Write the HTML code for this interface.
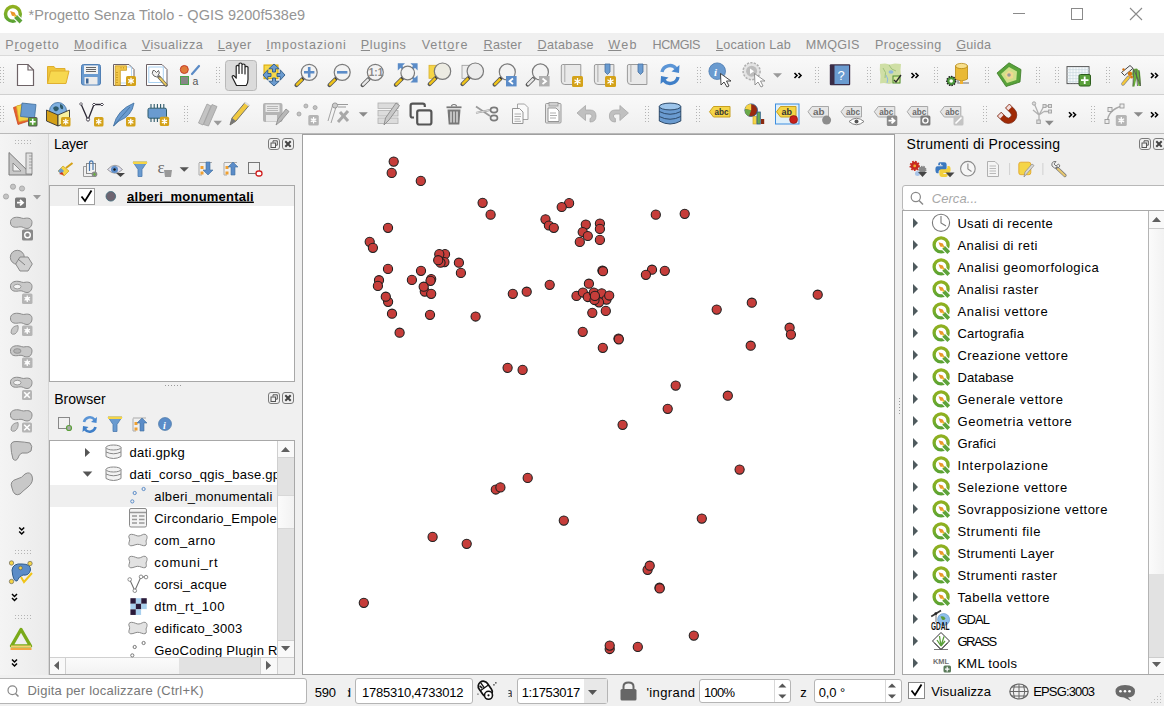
<!DOCTYPE html>
<html><head><meta charset="utf-8">
<style>
*{box-sizing:border-box;margin:0;padding:0}
html,body{width:1164px;height:706px;overflow:hidden;background:#f0f0f0;font-family:"Liberation Sans",sans-serif}
.a{position:absolute}
svg{display:block}
</style></head><body>
<div class="a" style="left:0;top:0;width:1164px;height:33px;background:#fff"></div>
<div class="a" style="left:0;top:55px;width:1164px;height:1px;background:#dadada"></div>
<div class="a" style="left:0;top:56px;width:1164px;height:38px;background:linear-gradient(#f9f9f9,#efefef)"></div>
<div class="a" style="left:0;top:94px;width:1164px;height:1px;background:#d0d0d0"></div>
<div class="a" style="left:0;top:95px;width:1164px;height:38px;background:linear-gradient(#f9f9f9,#efefef)"></div>
<div class="a" style="left:0;top:133px;width:1164px;height:1px;background:#b9b9b9"></div>
<div class="a" style="left:0;top:134px;width:48px;height:541px;background:linear-gradient(90deg,#f4f4f4,#ebebeb)"></div>
<div class="a" style="left:48px;top:134px;width:1px;height:541px;background:#d6d6d6"></div>
<!-- layer tree -->
<div class="a" style="left:49px;top:185px;width:246px;height:197px;background:#fff;border:1px solid #a8a8a8"></div>
<div class="a" style="left:50px;top:186px;width:244px;height:20px;background:#efefef"></div>
<!-- browser tree -->
<div class="a" style="left:49px;top:440px;width:246px;height:235px;background:#fff;border:1px solid #a8a8a8"></div>
<div class="a" style="left:50px;top:485px;width:227px;height:22px;background:#efefef"></div>
<div class="a" style="left:277px;top:441px;width:17px;height:216px;background:#e2e2e2;border-left:1px solid #cfcfcf"></div>
<div class="a" style="left:278px;top:441px;width:16px;height:17px;background:#f9f9f9;border-bottom:1px solid #d4d4d4"></div>
<div class="a" style="left:278px;top:495px;width:16px;height:34px;background:linear-gradient(90deg,#fbfbfb,#f2f2f2);border-top:1px solid #d8d8d8;border-bottom:1px solid #d8d8d8"></div>
<div class="a" style="left:278px;top:640px;width:16px;height:17px;background:#f9f9f9;border-top:1px solid #d0d0d0"></div>
<div class="a" style="left:50px;top:657px;width:244px;height:17px;background:#e2e2e2;border-top:1px solid #d0d0d0"></div>
<div class="a" style="left:50px;top:658px;width:16px;height:16px;background:#f9f9f9;border-right:1px solid #d0d0d0"></div>
<div class="a" style="left:66px;top:658px;width:113px;height:16px;background:linear-gradient(#fbfbfb,#f2f2f2)"></div>
<div class="a" style="left:260px;top:658px;width:17px;height:16px;background:#f9f9f9;border-left:1px solid #d0d0d0"></div>
<div class="a" style="left:277px;top:658px;width:17px;height:16px;background:#f0f0f0;border-left:1px solid #d0d0d0"></div>
<svg class="a" style="left:0;top:0" width="1164" height="706"><path d="M281 452H290L285.5 447Z M281 646H290.2L285.6 651Z M54 665.5L59 661V670Z M266 660.8V670L271.2 665.4Z" fill="#606060"/></svg>
<!-- map canvas -->
<div class="a" style="left:302px;top:134px;width:593px;height:541px;border:1px solid #a0a0a0;background:#fff;overflow:hidden">
<svg class="a" style="left:-303px;top:-135px" width="1164" height="706"><g fill="#c63d3a" stroke="#1e1e1e" stroke-width="1.05"><circle cx="393.7" cy="161.6" r="4.6"/><circle cx="391.7" cy="172.9" r="4.6"/><circle cx="420.8" cy="180.9" r="4.6"/><circle cx="482.6" cy="202.8" r="4.6"/><circle cx="490.6" cy="214.7" r="4.6"/><circle cx="388.0" cy="227.8" r="4.6"/><circle cx="369.7" cy="241.8" r="4.6"/><circle cx="372.9" cy="247.8" r="4.6"/><circle cx="388.0" cy="268.9" r="4.6"/><circle cx="379.0" cy="280.2" r="4.6"/><circle cx="377.9" cy="285.9" r="4.6"/><circle cx="388.1" cy="301.8" r="4.6"/><circle cx="385.8" cy="296.7" r="4.6"/><circle cx="392.0" cy="313.7" r="4.6"/><circle cx="411.9" cy="279.9" r="4.6"/><circle cx="421.0" cy="270.8" r="4.6"/><circle cx="431.2" cy="279.1" r="4.6"/><circle cx="430.5" cy="280.8" r="4.6"/><circle cx="424.8" cy="291.6" r="4.6"/><circle cx="423.7" cy="286.7" r="4.6"/><circle cx="431.2" cy="293.8" r="4.6"/><circle cx="430.0" cy="314.8" r="4.6"/><circle cx="445.0" cy="254.2" r="4.6"/><circle cx="444.4" cy="262.1" r="4.6"/><circle cx="439.3" cy="254.2" r="4.6"/><circle cx="440.5" cy="262.7" r="4.6"/><circle cx="438.2" cy="260.2" r="4.6"/><circle cx="458.9" cy="262.7" r="4.6"/><circle cx="460.9" cy="272.9" r="4.6"/><circle cx="475.6" cy="316.5" r="4.6"/><circle cx="512.8" cy="293.8" r="4.6"/><circle cx="526.7" cy="291.7" r="4.6"/><circle cx="549.7" cy="284.8" r="4.6"/><circle cx="569.1" cy="203.2" r="4.6"/><circle cx="561.7" cy="207.0" r="4.6"/><circle cx="545.5" cy="219.3" r="4.6"/><circle cx="548.9" cy="225.5" r="4.6"/><circle cx="553.8" cy="227.8" r="4.6"/><circle cx="655.8" cy="214.7" r="4.6"/><circle cx="684.7" cy="213.8" r="4.6"/><circle cx="585.8" cy="224.6" r="4.6"/><circle cx="599.9" cy="223.5" r="4.6"/><circle cx="599.9" cy="228.9" r="4.6"/><circle cx="582.7" cy="232.0" r="4.6"/><circle cx="587.8" cy="236.0" r="4.6"/><circle cx="579.8" cy="241.9" r="4.6"/><circle cx="599.9" cy="239.9" r="4.6"/><circle cx="602.4" cy="270.5" r="4.6"/><circle cx="603.0" cy="271.2" r="4.6"/><circle cx="652.0" cy="269.7" r="4.6"/><circle cx="645.9" cy="274.8" r="4.6"/><circle cx="664.8" cy="270.8" r="4.6"/><circle cx="588.9" cy="283.7" r="4.6"/><circle cx="576.5" cy="295.9" r="4.6"/><circle cx="582.9" cy="292.5" r="4.6"/><circle cx="587.8" cy="297.0" r="4.6"/><circle cx="593.8" cy="292.5" r="4.6"/><circle cx="601.7" cy="293.3" r="4.6"/><circle cx="606.5" cy="299.6" r="4.6"/><circle cx="609.2" cy="295.5" r="4.6"/><circle cx="599.0" cy="302.3" r="4.6"/><circle cx="594.5" cy="300.0" r="4.6"/><circle cx="594.9" cy="295.9" r="4.6"/><circle cx="592.3" cy="312.8" r="4.6"/><circle cx="605.8" cy="310.9" r="4.6"/><circle cx="582.7" cy="331.8" r="4.6"/><circle cx="602.8" cy="347.8" r="4.6"/><circle cx="618.5" cy="338.5" r="4.6"/><circle cx="618.8" cy="339.3" r="4.6"/><circle cx="716.7" cy="309.6" r="4.6"/><circle cx="751.8" cy="302.7" r="4.6"/><circle cx="817.7" cy="294.7" r="4.6"/><circle cx="789.6" cy="327.7" r="4.6"/><circle cx="790.9" cy="334.6" r="4.6"/><circle cx="750.7" cy="345.7" r="4.6"/><circle cx="507.6" cy="367.8" r="4.6"/><circle cx="522.6" cy="369.9" r="4.6"/><circle cx="675.7" cy="385.6" r="4.6"/><circle cx="727.8" cy="395.7" r="4.6"/><circle cx="667.7" cy="408.8" r="4.6"/><circle cx="622.6" cy="424.8" r="4.6"/><circle cx="739.6" cy="469.6" r="4.6"/><circle cx="527.7" cy="477.9" r="4.6"/><circle cx="495.8" cy="489.5" r="4.6"/><circle cx="500.4" cy="487.4" r="4.6"/><circle cx="563.8" cy="520.6" r="4.6"/><circle cx="701.8" cy="518.6" r="4.6"/><circle cx="432.6" cy="536.9" r="4.6"/><circle cx="466.7" cy="543.8" r="4.6"/><circle cx="399.6" cy="332.7" r="4.6"/><circle cx="363.8" cy="602.8" r="4.6"/><circle cx="647.6" cy="569.8" r="4.6"/><circle cx="649.7" cy="565.7" r="4.6"/><circle cx="659.5" cy="587.7" r="4.6"/><circle cx="659.7" cy="588.4" r="4.6"/><circle cx="693.8" cy="635.6" r="4.6"/><circle cx="609.7" cy="649.0" r="4.6"/><circle cx="609.7" cy="645.6" r="4.6"/><circle cx="637.8" cy="646.9" r="4.6"/></g></svg>
</div>
<!-- processing -->
<div class="a" style="left:902px;top:185px;width:270px;height:26px;background:#fff;border:1px solid #b8b8b8;border-radius:3px"></div>
<div class="a" style="left:902px;top:210px;width:270px;height:465px;background:#fff;border:1px solid #a8a8a8"></div>
<div class="a" style="left:1148px;top:211px;width:16px;height:463px;background:#e2e2e2;border-left:1px solid #b4b4b4"></div>
<div class="a" style="left:1149px;top:211px;width:15px;height:18px;background:#f9f9f9;border-bottom:1px solid #cdcdcd"></div>
<div class="a" style="left:1149px;top:229px;width:15px;height:345px;background:linear-gradient(90deg,#fbfbfb,#f2f2f2)"></div>
<div class="a" style="left:1149px;top:657px;width:15px;height:17px;background:#f9f9f9;border-top:1px solid #cdcdcd"></div>
<svg class="a" style="left:0;top:0" width="1164" height="706"><path d="M1152 222H1161L1156.5 217Z M1152 662H1161L1156.5 667Z" fill="#606060"/></svg>
<!-- status bar inputs -->
<div class="a" style="left:-3px;top:678px;width:310px;height:26px;background:#fff;border:1px solid #b5b5b5;border-radius:3px"></div>
<div class="a" style="left:355px;top:678px;width:118px;height:26px;background:#fff;border:1px solid #b5b5b5;border-radius:3px"></div>
<div class="a" style="left:517px;top:678px;width:91px;height:26px;background:#fff;border:1px solid #b5b5b5;border-radius:3px"></div>
<div class="a" style="left:584px;top:679px;width:23px;height:24px;background:#e8e8e8"></div>
<div class="a" style="left:699px;top:679px;width:92px;height:24px;background:#fff;border:1px solid #b5b5b5;border-radius:3px"></div>
<div class="a" style="left:774px;top:680px;width:1px;height:22px;background:#d8d8d8"></div>
<div class="a" style="left:814px;top:679px;width:88px;height:24px;background:#fff;border:1px solid #b5b5b5;border-radius:3px"></div>
<div class="a" style="left:885px;top:680px;width:1px;height:22px;background:#d8d8d8"></div>
<svg class="a" style="left:0;top:0;pointer-events:none" width="1164" height="706" font-family="Liberation Sans"><defs><linearGradient id="qg" x1="0" y1="0" x2="0" y2="1"><stop offset="0" stop-color="#90b020"/><stop offset="0.55" stop-color="#79ad28"/><stop offset="1" stop-color="#5aa232"/></linearGradient></defs><circle cx="12.894444444444446" cy="13.894444444444446" r="7.388888888888889" fill="none" stroke="url(#qg)" stroke-width="3.4833333333333334"/><path d="M15.322222222222221 16.322222222222223L20.705555555555556 21.705555555555556" stroke="#fff" stroke-width="6.333333333333334" stroke-linecap="butt"/><path d="M15.533333333333333 16.53333333333333L21.022222222222226 22.022222222222226" stroke="#5da33a" stroke-width="4.011111111111111" stroke-linecap="butt"/><path d="M10.15 11.044444444444444L14.688888888888888 12.522222222222222L16.58888888888889 16.744444444444444L11.944444444444445 15.688888888888888Z" fill="#e8952a"/><path d="M13.422222222222222 14.316666666666668L16.58888888888889 16.744444444444444L14.266666666666666 16.63888888888889Z" fill="#f5d040"/><path d="M1013 13.5H1025" stroke="#8a8a8a"/><rect x="1071.5" y="8.5" width="11" height="11" fill="none" stroke="#8a8a8a"/><path d="M1130 8L1142 20M1142 8L1130 20" stroke="#8a8a8a" stroke-width="1.1"/><g fill="#9a9a9a"><rect x="165" y="385" width="1" height="1"/><rect x="899" y="398" width="1" height="1"/><rect x="168" y="385" width="1" height="1"/><rect x="899" y="401" width="1" height="1"/><rect x="171" y="385" width="1" height="1"/><rect x="899" y="404" width="1" height="1"/><rect x="174" y="385" width="1" height="1"/><rect x="899" y="407" width="1" height="1"/><rect x="177" y="385" width="1" height="1"/><rect x="899" y="410" width="1" height="1"/><rect x="180" y="385" width="1" height="1"/><rect x="899" y="413" width="1" height="1"/></g><g fill="#b4b4b4"><rect x="0" y="67" width="1" height="1"/><rect x="3" y="67" width="1" height="1"/><rect x="0" y="70" width="1" height="1"/><rect x="3" y="70" width="1" height="1"/><rect x="0" y="73" width="1" height="1"/><rect x="3" y="73" width="1" height="1"/><rect x="0" y="76" width="1" height="1"/><rect x="3" y="76" width="1" height="1"/><rect x="0" y="79" width="1" height="1"/><rect x="3" y="79" width="1" height="1"/><rect x="0" y="82" width="1" height="1"/><rect x="3" y="82" width="1" height="1"/><rect x="216" y="67" width="1" height="1"/><rect x="219" y="67" width="1" height="1"/><rect x="216" y="70" width="1" height="1"/><rect x="219" y="70" width="1" height="1"/><rect x="216" y="73" width="1" height="1"/><rect x="219" y="73" width="1" height="1"/><rect x="216" y="76" width="1" height="1"/><rect x="219" y="76" width="1" height="1"/><rect x="216" y="79" width="1" height="1"/><rect x="219" y="79" width="1" height="1"/><rect x="216" y="82" width="1" height="1"/><rect x="219" y="82" width="1" height="1"/><rect x="697" y="67" width="1" height="1"/><rect x="700" y="67" width="1" height="1"/><rect x="697" y="70" width="1" height="1"/><rect x="700" y="70" width="1" height="1"/><rect x="697" y="73" width="1" height="1"/><rect x="700" y="73" width="1" height="1"/><rect x="697" y="76" width="1" height="1"/><rect x="700" y="76" width="1" height="1"/><rect x="697" y="79" width="1" height="1"/><rect x="700" y="79" width="1" height="1"/><rect x="697" y="82" width="1" height="1"/><rect x="700" y="82" width="1" height="1"/><rect x="815" y="67" width="1" height="1"/><rect x="818" y="67" width="1" height="1"/><rect x="815" y="70" width="1" height="1"/><rect x="818" y="70" width="1" height="1"/><rect x="815" y="73" width="1" height="1"/><rect x="818" y="73" width="1" height="1"/><rect x="815" y="76" width="1" height="1"/><rect x="818" y="76" width="1" height="1"/><rect x="815" y="79" width="1" height="1"/><rect x="818" y="79" width="1" height="1"/><rect x="815" y="82" width="1" height="1"/><rect x="818" y="82" width="1" height="1"/><rect x="867" y="67" width="1" height="1"/><rect x="870" y="67" width="1" height="1"/><rect x="867" y="70" width="1" height="1"/><rect x="870" y="70" width="1" height="1"/><rect x="867" y="73" width="1" height="1"/><rect x="870" y="73" width="1" height="1"/><rect x="867" y="76" width="1" height="1"/><rect x="870" y="76" width="1" height="1"/><rect x="867" y="79" width="1" height="1"/><rect x="870" y="79" width="1" height="1"/><rect x="867" y="82" width="1" height="1"/><rect x="870" y="82" width="1" height="1"/><rect x="934" y="67" width="1" height="1"/><rect x="937" y="67" width="1" height="1"/><rect x="934" y="70" width="1" height="1"/><rect x="937" y="70" width="1" height="1"/><rect x="934" y="73" width="1" height="1"/><rect x="937" y="73" width="1" height="1"/><rect x="934" y="76" width="1" height="1"/><rect x="937" y="76" width="1" height="1"/><rect x="934" y="79" width="1" height="1"/><rect x="937" y="79" width="1" height="1"/><rect x="934" y="82" width="1" height="1"/><rect x="937" y="82" width="1" height="1"/><rect x="985" y="67" width="1" height="1"/><rect x="988" y="67" width="1" height="1"/><rect x="985" y="70" width="1" height="1"/><rect x="988" y="70" width="1" height="1"/><rect x="985" y="73" width="1" height="1"/><rect x="988" y="73" width="1" height="1"/><rect x="985" y="76" width="1" height="1"/><rect x="988" y="76" width="1" height="1"/><rect x="985" y="79" width="1" height="1"/><rect x="988" y="79" width="1" height="1"/><rect x="985" y="82" width="1" height="1"/><rect x="988" y="82" width="1" height="1"/><rect x="1036" y="67" width="1" height="1"/><rect x="1039" y="67" width="1" height="1"/><rect x="1036" y="70" width="1" height="1"/><rect x="1039" y="70" width="1" height="1"/><rect x="1036" y="73" width="1" height="1"/><rect x="1039" y="73" width="1" height="1"/><rect x="1036" y="76" width="1" height="1"/><rect x="1039" y="76" width="1" height="1"/><rect x="1036" y="79" width="1" height="1"/><rect x="1039" y="79" width="1" height="1"/><rect x="1036" y="82" width="1" height="1"/><rect x="1039" y="82" width="1" height="1"/><rect x="1055" y="67" width="1" height="1"/><rect x="1058" y="67" width="1" height="1"/><rect x="1055" y="70" width="1" height="1"/><rect x="1058" y="70" width="1" height="1"/><rect x="1055" y="73" width="1" height="1"/><rect x="1058" y="73" width="1" height="1"/><rect x="1055" y="76" width="1" height="1"/><rect x="1058" y="76" width="1" height="1"/><rect x="1055" y="79" width="1" height="1"/><rect x="1058" y="79" width="1" height="1"/><rect x="1055" y="82" width="1" height="1"/><rect x="1058" y="82" width="1" height="1"/><rect x="1106" y="67" width="1" height="1"/><rect x="1109" y="67" width="1" height="1"/><rect x="1106" y="70" width="1" height="1"/><rect x="1109" y="70" width="1" height="1"/><rect x="1106" y="73" width="1" height="1"/><rect x="1109" y="73" width="1" height="1"/><rect x="1106" y="76" width="1" height="1"/><rect x="1109" y="76" width="1" height="1"/><rect x="1106" y="79" width="1" height="1"/><rect x="1109" y="79" width="1" height="1"/><rect x="1106" y="82" width="1" height="1"/><rect x="1109" y="82" width="1" height="1"/><rect x="0" y="106" width="1" height="1"/><rect x="3" y="106" width="1" height="1"/><rect x="0" y="109" width="1" height="1"/><rect x="3" y="109" width="1" height="1"/><rect x="0" y="112" width="1" height="1"/><rect x="3" y="112" width="1" height="1"/><rect x="0" y="115" width="1" height="1"/><rect x="3" y="115" width="1" height="1"/><rect x="0" y="118" width="1" height="1"/><rect x="3" y="118" width="1" height="1"/><rect x="0" y="121" width="1" height="1"/><rect x="3" y="121" width="1" height="1"/><rect x="184" y="106" width="1" height="1"/><rect x="187" y="106" width="1" height="1"/><rect x="184" y="109" width="1" height="1"/><rect x="187" y="109" width="1" height="1"/><rect x="184" y="112" width="1" height="1"/><rect x="187" y="112" width="1" height="1"/><rect x="184" y="115" width="1" height="1"/><rect x="187" y="115" width="1" height="1"/><rect x="184" y="118" width="1" height="1"/><rect x="187" y="118" width="1" height="1"/><rect x="184" y="121" width="1" height="1"/><rect x="187" y="121" width="1" height="1"/><rect x="645" y="106" width="1" height="1"/><rect x="648" y="106" width="1" height="1"/><rect x="645" y="109" width="1" height="1"/><rect x="648" y="109" width="1" height="1"/><rect x="645" y="112" width="1" height="1"/><rect x="648" y="112" width="1" height="1"/><rect x="645" y="115" width="1" height="1"/><rect x="648" y="115" width="1" height="1"/><rect x="645" y="118" width="1" height="1"/><rect x="648" y="118" width="1" height="1"/><rect x="645" y="121" width="1" height="1"/><rect x="648" y="121" width="1" height="1"/><rect x="696" y="106" width="1" height="1"/><rect x="699" y="106" width="1" height="1"/><rect x="696" y="109" width="1" height="1"/><rect x="699" y="109" width="1" height="1"/><rect x="696" y="112" width="1" height="1"/><rect x="699" y="112" width="1" height="1"/><rect x="696" y="115" width="1" height="1"/><rect x="699" y="115" width="1" height="1"/><rect x="696" y="118" width="1" height="1"/><rect x="699" y="118" width="1" height="1"/><rect x="696" y="121" width="1" height="1"/><rect x="699" y="121" width="1" height="1"/><rect x="983" y="106" width="1" height="1"/><rect x="986" y="106" width="1" height="1"/><rect x="983" y="109" width="1" height="1"/><rect x="986" y="109" width="1" height="1"/><rect x="983" y="112" width="1" height="1"/><rect x="986" y="112" width="1" height="1"/><rect x="983" y="115" width="1" height="1"/><rect x="986" y="115" width="1" height="1"/><rect x="983" y="118" width="1" height="1"/><rect x="986" y="118" width="1" height="1"/><rect x="983" y="121" width="1" height="1"/><rect x="986" y="121" width="1" height="1"/><rect x="1091" y="106" width="1" height="1"/><rect x="1094" y="106" width="1" height="1"/><rect x="1091" y="109" width="1" height="1"/><rect x="1094" y="109" width="1" height="1"/><rect x="1091" y="112" width="1" height="1"/><rect x="1094" y="112" width="1" height="1"/><rect x="1091" y="115" width="1" height="1"/><rect x="1094" y="115" width="1" height="1"/><rect x="1091" y="118" width="1" height="1"/><rect x="1094" y="118" width="1" height="1"/><rect x="1091" y="121" width="1" height="1"/><rect x="1094" y="121" width="1" height="1"/></g><path d="M17.5 64.5H28L33.5 70V85.5H17.5Z" fill="#fff" stroke="#6d6266" stroke-width="1.2"/><path d="M28 64.5V70H33.5" fill="none" stroke="#6d6266" stroke-width="1.2"/><path d="M47.5 83.5V66.5H54L55.5 68.5H65V71" fill="#f0c63a" stroke="#dfae2e"/><path d="M47.5 83.5L50.5 71H69L66 83.5Z" fill="#f7d84f" stroke="#e0b030"/><rect x="81.5" y="64.5" width="19" height="20.5" rx="2" fill="#6a9bd0" stroke="#507fb4"/><rect x="84" y="65.5" width="14" height="8.5" fill="#f2f2f2"/><path d="M86 67.5H96M86 69.5H96M86 71.5H96" stroke="#555" stroke-width="0.9"/><rect x="84.5" y="77" width="13" height="7.5" fill="#ececec"/><rect x="86" y="78.5" width="2.5" height="5" fill="#3d6494"/><path d="M113.5 64.5H129L134 69.5V85.5H113.5Z" fill="#fff" stroke="#6d6266"/><rect x="117" y="67" width="14.5" height="16" fill="none" stroke="#a9d0f0" stroke-width="0.8"/><path d="M115.2 65.8H126.5V70.3H120.3V85.3H115.2Z" fill="#f2c84b" stroke="#c99a22" stroke-width="0.8"/><path d="M116 72.5H118M116 75H118M116 77.5H118M116 80H118M116 82.5H118M121 67V68.5M123.5 67V68.5" stroke="#b08010" stroke-width="0.6"/><rect x="126" y="76" width="10" height="10" rx="1.5" fill="#d4a219"/><path d="M131.0 77.8V84.2M128.216 79.4L133.784 82.6M128.216 82.6L133.784 79.4" stroke="#fff" stroke-width="1.3"/><path d="M146.5 64.5H162L167 69.5V85.5H146.5Z" fill="#fff" stroke="#6d6266"/><rect x="148.8" y="67" width="14.5" height="15.5" fill="none" stroke="#a9d0f0"/><path d="M159 77L166 85" stroke="#555" stroke-width="3.4" stroke-linecap="round"/><path d="M159.5 77.5L165.8 84.6" stroke="#e8c860" stroke-width="2" stroke-linecap="round"/><path d="M153 70.5Q151 73.5 154 76Q156.5 77.5 159 76.5L160 77.5L158 75.5Q160.5 73 158.5 70.5L156.5 72.5L154.5 70.5Z" fill="#f2f2f2" stroke="#666" stroke-width="1"/><circle cx="184.3" cy="69.5" r="4" fill="#e07b39" stroke="#c43b2a"/><path d="M192 74L199 66" stroke="#5b8bc6" stroke-width="2.2" stroke-linecap="round"/><rect x="180.5" y="76.5" width="8" height="8" fill="#878787" stroke="#4aa34a"/><text x="192.5" y="84.5" font-size="10.5" fill="#555" font-family="Liberation Sans">a</text><rect x="225.5" y="60.5" width="31" height="30" rx="3" fill="#dbdbdb" stroke="#b9b9b9"/><path d="M236.5 85.5L232.3 77.2Q231.8 75.2 233.8 75.6L236.2 78.2V66.2Q237.6 64.4 239 66.2V73.5V63.8Q240.5 62.2 242 63.8V73.5V64.8Q243.5 63.2 245 64.8V74V67.2Q246.5 65.6 248 67.2V79.5Q248 83 246.2 85.5Z" fill="#fff" stroke="#222" stroke-width="1.2" stroke-linejoin="round"/><rect x="264" y="65" width="14" height="13.7" fill="#f7d84a" stroke="#d9a800" stroke-width="1"/><path d="M274 64L279.2 68.8H275.5V72H272.5V68.8H268.8ZM274 86L279.2 81.2H275.5V78H272.5V81.2H268.8ZM263 75L267.8 69.8V73.5H271V76.5H267.8V80.2ZM285 75L280.2 69.8V73.5H277V76.5H280.2V80.2Z" fill="#6a9bd0" stroke="#2f5a86" stroke-width="0.9" stroke-linejoin="round"/><path d="M302.44 79.06L296.44 85.06" stroke="#555" stroke-width="4" stroke-linecap="round"/><path d="M301.94 79.56L296.94 84.56" stroke="#f0c419" stroke-width="2.4" stroke-linecap="round"/><circle cx="303.44" cy="78.06" r="1.6" fill="#333"/><circle cx="309.2" cy="72.3" r="8" fill="#f3f3f3" stroke="#7a7a7a" stroke-width="1.2"/><path d="M304 72.3H314.4M309.2 67.1V77.5" stroke="#5b8cc8" stroke-width="2.6"/><path d="M335.44 79.06L329.44 85.06" stroke="#555" stroke-width="4" stroke-linecap="round"/><path d="M334.94 79.56L329.94 84.56" stroke="#f0c419" stroke-width="2.4" stroke-linecap="round"/><circle cx="336.44" cy="78.06" r="1.6" fill="#333"/><circle cx="342.2" cy="72.3" r="8" fill="#f3f3f3" stroke="#7a7a7a" stroke-width="1.2"/><path d="M337 72.3H347.4" stroke="#5b8cc8" stroke-width="2.6"/><path d="M368.54 79.06L362.54 85.06" stroke="#555" stroke-width="4" stroke-linecap="round"/><path d="M368.04 79.56L363.04 84.56" stroke="#e8e8e8" stroke-width="2.4" stroke-linecap="round"/><circle cx="369.54" cy="78.06" r="1.6" fill="#777"/><circle cx="375.3" cy="72.3" r="8" fill="#f3f3f3" stroke="#7a7a7a" stroke-width="1.2"/><text x="368.8" y="76.3" font-size="10" font-weight="bold" fill="#8a8a8a" font-family="Liberation Sans">1:1</text><path d="M397.8 63.3H405L397.8 70.5ZM417.6 63.3H410.4L417.6 70.5ZM417.6 82.5H410.4L417.6 75.3Z" fill="#5b8cc8"/><path d="M400 65.5L404 69.5M415.4 65.5L411.4 69.5M415.4 80.3L411.4 76.3" stroke="#5b8cc8" stroke-width="2.5"/><path d="M401.804 78.896L395.804 84.896" stroke="#555" stroke-width="4" stroke-linecap="round"/><path d="M401.304 79.396L396.304 84.396" stroke="#f0c419" stroke-width="2.4" stroke-linecap="round"/><circle cx="402.804" cy="77.896" r="1.6" fill="#333"/><circle cx="407.7" cy="73" r="6.8" fill="#f3f3f3" stroke="#7a7a7a" stroke-width="1.2"/><rect x="429" y="65.3" width="8" height="13" fill="#f5d547" stroke="#d8b030" stroke-width="0.8"/><path d="M435.596 78.104L429.596 84.104" stroke="#555" stroke-width="4" stroke-linecap="round"/><path d="M435.096 78.604L430.096 83.604" stroke="#f0c419" stroke-width="2.4" stroke-linecap="round"/><circle cx="436.596" cy="77.104" r="1.6" fill="#333"/><circle cx="442.5" cy="71.2" r="8.2" fill="#ecebe2" stroke="#7a7a7a" stroke-width="1.2"/><rect x="462" y="65.3" width="8" height="13" fill="#eee" stroke="#999" stroke-width="0.8"/><path d="M468.396 78.104L462.396 84.104" stroke="#555" stroke-width="4" stroke-linecap="round"/><path d="M467.896 78.604L462.896 83.604" stroke="#f0c419" stroke-width="2.4" stroke-linecap="round"/><circle cx="469.396" cy="77.104" r="1.6" fill="#333"/><circle cx="475.3" cy="71.2" r="8.2" fill="#ececec" stroke="#7a7a7a" stroke-width="1.2"/><path d="M500.54 78.66000000000001L494.54 84.66000000000001" stroke="#555" stroke-width="4" stroke-linecap="round"/><path d="M500.04 79.16000000000001L495.04 84.16000000000001" stroke="#f0c419" stroke-width="2.4" stroke-linecap="round"/><circle cx="501.54" cy="77.66000000000001" r="1.6" fill="#333"/><circle cx="507.3" cy="71.9" r="8" fill="#f3f3f3" stroke="#7a7a7a" stroke-width="1.2"/><rect x="506" y="76" width="10.6" height="10.4" fill="#5b8cc8"/><path d="M513 78.5L509.5 81.2L513 84" stroke="#fff" stroke-width="1.8" fill="none"/><path d="M533.64 78.66000000000001L527.64 84.66000000000001" stroke="#555" stroke-width="4" stroke-linecap="round"/><path d="M533.14 79.16000000000001L528.14 84.16000000000001" stroke="#e8e8e8" stroke-width="2.4" stroke-linecap="round"/><circle cx="534.64" cy="77.66000000000001" r="1.6" fill="#777"/><circle cx="540.4" cy="71.9" r="8" fill="#f3f3f3" stroke="#7a7a7a" stroke-width="1.2"/><rect x="539" y="76" width="10.6" height="10.4" fill="#b0b0b0"/><path d="M542.5 78.5L546 81.2L542.5 84" stroke="#fff" stroke-width="1.8" fill="none"/><path d="M562.8 64.5H580.8V84.5H564.8Q561.3 84.5 561.3 81V66Q561.3 64.5 562.8 64.5Z" fill="#e9e9e9" stroke="#9a9a9a"/><path d="M564.8 64.5V82" stroke="#aaa"/><rect x="572" y="76" width="11" height="11" rx="1.5" fill="#d4a219"/><path d="M577.5 77.98V85.02M574.4376 79.74L580.5624 83.26M574.4376 83.26L580.5624 79.74" stroke="#fff" stroke-width="1.3"/><path d="M595.9 64.5H613.9V84.5H597.9Q594.4 84.5 594.4 81V66Q594.4 64.5 595.9 64.5Z" fill="#e9e9e9" stroke="#9a9a9a"/><path d="M597.9 64.5V82" stroke="#aaa"/><path d="M605 64H610V72L607.5 74.5L605 72Z" fill="#6a9bd0" stroke="#46709e" stroke-width="0.8"/><rect x="605" y="76" width="11" height="11" rx="1.5" fill="#d4a219"/><path d="M610.5 77.98V85.02M607.4376 79.74L613.5624 83.26M607.4376 83.26L613.5624 79.74" stroke="#fff" stroke-width="1.3"/><path d="M628.9 64.5H646.9V84.5H630.9Q627.4 84.5 627.4 81V66Q627.4 64.5 628.9 64.5Z" fill="#e9e9e9" stroke="#9a9a9a"/><path d="M630.9 64.5V82" stroke="#aaa"/><path d="M638 64H643V72L640.5 74.5L638 72Z" fill="#6a9bd0" stroke="#46709e" stroke-width="0.8"/><path d="M662 72A8 8 0 0 1 676 68.5" fill="none" stroke="#5b95d6" stroke-width="3.4"/><path d="M679.5 65L679 73L671.5 71.5Z" fill="#4a89d0"/><path d="M678 77A8 8 0 0 1 664 80.5" fill="none" stroke="#3f7fc8" stroke-width="3.4"/><path d="M660.5 84L661 76L668.5 77.5Z" fill="#3f7fc8"/><circle cx="717.2" cy="71.2" r="8.3" fill="#6a9bd0" stroke="#4a7ab0" stroke-width="0.8"/><text x="714" y="76" font-size="11" font-weight="bold" font-style="italic" fill="#fff" font-family="Liberation Serif">i</text><path d="M720.5 73.5L721 85L724 82L727 87L729 86L726.5 81H731Z" fill="#fff" stroke="#333" stroke-width="0.9"/><circle cx="751.6" cy="71.2" r="8.5" fill="#e4e4e4" stroke="#b0b0b0" stroke-width="1.5" stroke-dasharray="2.2 1.3"/><circle cx="751.6" cy="71.2" r="5.5" fill="#bdbdbd"/><path d="M750 68.5V74L754 71.2Z" fill="#fff"/><path d="M754.5 73.5L755 85L758 82L761 87L763 86L760.5 81H765Z" fill="#fff" stroke="#888" stroke-width="0.9"/><path d="M773 73.3h9l-4.5 4.5z" fill="#9a9a9a"/><path d="M794.5 73l2.5 2.5l-2.5 2.5M798.5 73l2.5 2.5l-2.5 2.5" stroke="#000" stroke-width="1.6" fill="none"/><rect x="829.8" y="64.3" width="20.4" height="21" fill="#3a2c46" rx="1"/><rect x="834.5" y="65.5" width="14.5" height="18.5" fill="#6a9bd0"/><text x="837.5" y="80" font-size="13" fill="#fff" font-family="Liberation Sans">?</text><path d="M880 64L885 63.5L890 64.5L895 63.5L901 64L900.5 70L901 76L900 83.5L894 83L889 84L884 83L880 83.5L880.5 76L879.8 70Z" fill="#cfdfa5"/><path d="M883 68Q887 72 885 78M889 65Q891 70 896 71" stroke="#9fc27a" fill="none"/><ellipse cx="891" cy="72" rx="2.5" ry="1.8" fill="#8fb8e0"/><path d="M886 75Q889 79 887 83" stroke="#8fb8e0" fill="none" stroke-width="1"/><rect x="893" y="76" width="7" height="7" fill="#d6e8a0" stroke="#4c8c2c"/><path d="M894 80L896 82L901 75" stroke="#2a2a2a" stroke-width="1.3" fill="none"/><path d="M911.5 73l2.5 2.5l-2.5 2.5M915.5 73l2.5 2.5l-2.5 2.5" stroke="#000" stroke-width="1.6" fill="none"/><path d="M955.5 66V79Q961.5 82.5 967.5 79V66Z" fill="#e9b935" stroke="#b88a14" stroke-width="0.8"/><ellipse cx="961.5" cy="66" rx="6" ry="2.6" fill="#f7df8c" stroke="#b88a14" stroke-width="0.8"/><path d="M958 80V83H969" stroke="#999" stroke-width="1.6" fill="none"/><rect x="960" y="81" width="3" height="3" fill="#f0b030"/><circle cx="951.2" cy="81" r="4.4" fill="#4a9a3a" stroke="#222" stroke-width="1.5" stroke-dasharray="1.5 1"/><circle cx="951.2" cy="81" r="1.8" fill="#fff"/><path d="M1009 62.8L1021 69.5L1020 82L1006 86.5L997 73Z" fill="#58a23a" stroke="#3b7a26" stroke-width="0.8"/><path d="M1009 67L1017 71.5L1016.3 80L1007 83L1001 74Z" fill="#cfe08a"/><path d="M1009 70.5L1013.5 73L1013 78L1008 79.5L1004.5 74.5Z" fill="#f0d890"/><circle cx="1009" cy="75" r="1.8" fill="#999"/><rect x="1067" y="66.6" width="22" height="17" fill="#f4f8fa" stroke="#555" stroke-width="1"/><path d="M1070 67V83.5" stroke="#c6d4dc" stroke-width="0.6"/><path d="M1073 67V83.5" stroke="#c6d4dc" stroke-width="0.6"/><path d="M1076 67V83.5" stroke="#c6d4dc" stroke-width="0.6"/><path d="M1079 67V83.5" stroke="#c6d4dc" stroke-width="0.6"/><path d="M1082 67V83.5" stroke="#c6d4dc" stroke-width="0.6"/><path d="M1085 67V83.5" stroke="#c6d4dc" stroke-width="0.6"/><path d="M1088 67V83.5" stroke="#c6d4dc" stroke-width="0.6"/><path d="M1067.5 69.6H1089" stroke="#c6d4dc" stroke-width="0.6"/><path d="M1067.5 72.6H1089" stroke="#c6d4dc" stroke-width="0.6"/><path d="M1067.5 75.6H1089" stroke="#c6d4dc" stroke-width="0.6"/><path d="M1067.5 78.6H1089" stroke="#c6d4dc" stroke-width="0.6"/><path d="M1067.5 81.6H1089" stroke="#c6d4dc" stroke-width="0.6"/><rect x="1079" y="74.5" width="11.5" height="11.5" rx="1.5" fill="#5aa03a" stroke="#2e5e1e"/><path d="M1084.7 76.5V84M1081 80.2H1088.5" stroke="#fff" stroke-width="1.8"/><path d="M1121.5 72.5L1130 65.5L1133 68.3L1124.5 75.5Z" fill="#f4f4f4" stroke="#444" stroke-width="1"/><circle cx="1123.5" cy="69.5" r="1.2" fill="#d07010"/><path d="M1128.3 77.5L1123 83.8" stroke="#888" stroke-width="3.6" stroke-linecap="round"/><path d="M1128.3 77.5L1123 83.8" stroke="#f5c83a" stroke-width="2.3" stroke-linecap="round"/><path d="M1133 69L1137 68.5L1140 72L1141 86L1138.5 86L1136.5 78L1134.5 86.5H1132.5L1133.5 78L1132 74Z" fill="#6ab23a"/><path d="M1133.5 68.5L1133 86.5M1136 69L1137.5 86M1139 70L1140.5 86M1134 70L1140 84" stroke="#555" stroke-width="0.8" fill="none"/><circle cx="1130" cy="73.7" r="2.2" fill="#d97a10"/><circle cx="1131.5" cy="77" r="1.5" fill="#d97a10"/><path d="M1151 73l2.5 2.5l-2.5 2.5M1155 73l2.5 2.5l-2.5 2.5" stroke="#000" stroke-width="1.6" fill="none"/><path d="M13.5 107.5L24 104L28.5 121L18 124.5Z" fill="#e7622f" stroke="#c9481e" stroke-width="0.8"/><path d="M16.5 106L27 103.5L29.5 119.5L19 121.5Z" fill="#f5d547" stroke="#d8b030" stroke-width="0.8"/><path d="M22 103L36 104.5L34.5 118L20.5 116.5Z" fill="#6a9bd0" stroke="#3f6e9e" stroke-width="0.8"/><rect x="28" y="117" width="9.5" height="9.5" rx="1.5" fill="#555"/><rect x="29" y="118" width="7.5" height="7.5" fill="#5aa03a"/><path d="M32.7 118.8V124.7M29.8 121.8H35.6" stroke="#fff" stroke-width="1.6"/><circle cx="58" cy="111" r="8.5" fill="#7fb0e0" stroke="#3f6e9e" stroke-width="0.8"/><path d="M53 108Q55 105 58 107Q60 109 57 111Q55 112 54 110ZM60 104Q64 105 63 109Q61 110 60 107Z" fill="#2d5a6a"/><path d="M46.5 110L58 115L58 126L46.5 121Z" fill="#d4a017" stroke="#333" stroke-width="0.9"/><path d="M58 115L69.5 110V121L58 126Z" fill="#f7f0a0" stroke="#333" stroke-width="0.9"/><rect x="61" y="117" width="9.5" height="9.5" rx="1.5" fill="#d4a219"/><path d="M65.75 118.71V124.79M63.105199999999996 120.23L68.3948 123.27M63.105199999999996 123.27L68.3948 120.23" stroke="#fff" stroke-width="1.3"/><path d="M81 104L88 120L94 104.5L102 104.5" stroke="#2d2a36" stroke-width="1.3" fill="none"/><path d="M79.5 104l1.5-1.5l1.5 1.5l-1.5 1.5z M92.5 104.5l1.5-1.5l1.5 1.5l-1.5 1.5z M100.5 104.5l1.5-1.5l1.5 1.5l-1.5 1.5z" fill="#fff" stroke="#2d2a36" stroke-width="0.8"/><circle cx="88" cy="119.5" r="1.6" fill="#fff" stroke="#2d2a36" stroke-width="0.8"/><rect x="94" y="117" width="9.5" height="9.5" rx="1.5" fill="#d4a219"/><path d="M98.75 118.71V124.79M96.1052 120.23L101.3948 123.27M96.1052 123.27L101.3948 120.23" stroke="#fff" stroke-width="1.3"/><path d="M113.5 126Q117 110 134 103Q132 116 119 121Z" fill="#6a9bd0" stroke="#3f6e9e" stroke-width="0.8"/><path d="M113.5 126L130 107" stroke="#3f6e9e" stroke-width="0.8"/><rect x="126" y="117" width="9.5" height="9.5" rx="1.5" fill="#d4a219"/><path d="M130.75 118.71V124.79M128.1052 120.23L133.3948 123.27M128.1052 123.27L133.3948 120.23" stroke="#fff" stroke-width="1.3"/><rect x="148" y="108.2" width="18.5" height="10" rx="1.5" fill="#6a9bd0" stroke="#2d5a6a"/><path d="M151.0 104V108M151.0 118V122" stroke="#2d5a6a" stroke-width="1.1"/><path d="M154.2 104V108M154.2 118V122" stroke="#2d5a6a" stroke-width="1.1"/><path d="M157.4 104V108M157.4 118V122" stroke="#2d5a6a" stroke-width="1.1"/><path d="M160.6 104V108M160.6 118V122" stroke="#2d5a6a" stroke-width="1.1"/><path d="M163.8 104V108M163.8 118V122" stroke="#2d5a6a" stroke-width="1.1"/><rect x="159.8" y="116.8" width="9.3" height="9.3" rx="1.5" fill="#d4a219"/><path d="M164.45000000000002 118.474V124.426M161.86088 119.962L167.03912000000003 122.938M161.86088 122.938L167.03912000000003 119.962" stroke="#fff" stroke-width="1.3"/><path d="M198.5 123L207 104L211 106L203 125Z" fill="#c4c4c4" stroke="#a0a0a0" stroke-width="0.8"/><path d="M203.5 124.5L212 104.5L217 106.5L208.5 126Z" fill="#bcbcbc" stroke="#a0a0a0" stroke-width="0.8"/><path d="M213.5 120.8h8.5l-4.25 4.6z" fill="#9a9a9a"/><path d="M230 125L232 118L245 102.5L249 105.5L236 121Z" fill="#f0c940" stroke="#666" stroke-width="0.9"/><path d="M230 125L232 118L236 121Z" fill="#777"/><path d="M245 102.5L249 105.5" stroke="#e0e0e0" stroke-width="2"/><rect x="263" y="103" width="19.5" height="19" rx="2" fill="#b4b4b4"/><rect x="265.5" y="104.5" width="14" height="7.5" fill="#e8e8e8"/><path d="M267 106.5H278M267 108.5H278M267 110.5H278" stroke="#aaa" stroke-width="0.8"/><rect x="266" y="115" width="11" height="6.5" fill="#e8e8e8"/><path d="M276 125L278 119L286 109L289 111.5L281 121Z" fill="#b8b8b8" stroke="#8a8a8a" stroke-width="0.8"/><circle cx="305.9" cy="106" r="2" fill="#c2c2c2" stroke="#a0a0a0" stroke-width="0.8"/><circle cx="315.1" cy="107.6" r="2" fill="#c2c2c2" stroke="#a0a0a0" stroke-width="0.8"/><circle cx="299" cy="114" r="2" fill="#c2c2c2" stroke="#a0a0a0" stroke-width="0.8"/><rect x="308.3" y="115" width="10.5" height="10.5" rx="1.5" fill="#b5b5b5"/><path d="M313.55 117.1V123.4M310.8095 118.675L316.2905 121.825M310.8095 121.825L316.2905 118.675" stroke="#fff" stroke-width="1.2"/><circle cx="313.55" cy="120.25" r="1.5" fill="none" stroke="#fff"/><path d="M328 121L333 104M331 123L336 107" stroke="#9a9a9a" stroke-width="0.9"/><circle cx="335" cy="105.5" r="2.6" fill="#ccc" stroke="#8a8a8a" stroke-width="0.8"/><path d="M337 104.5H348M338 107H346" stroke="#9a9a9a" stroke-width="1"/><path d="M338 122L348 111M340 112L348 121" stroke="#a8a8a8" stroke-width="3"/><path d="M358.8 112.2h9l-4.5 4.6z" fill="#8a8a8a"/><rect x="378" y="103" width="20" height="5.5" fill="#dcdcdc" stroke="#b0b0b0" stroke-width="0.8"/><rect x="378" y="110.5" width="20" height="5.5" fill="#dcdcdc" stroke="#b0b0b0" stroke-width="0.8"/><rect x="378" y="118" width="20" height="5.5" fill="#dcdcdc" stroke="#b0b0b0" stroke-width="0.8"/><path d="M384 125L385.5 118L396 103L399.5 105.5L389 120Z" fill="#c8c8c8" stroke="#8a8a8a" stroke-width="0.9"/><path d="M414 117.5H412.5Q410.6 117.5 410.6 115.5V105.7Q410.6 103.7 412.6 103.7H422.8Q424.8 103.7 424.8 105.7V107" fill="none" stroke="#555" stroke-width="2.2"/><rect x="417.2" y="110.3" width="14.2" height="14.2" rx="2" fill="none" stroke="#555" stroke-width="2.2"/><path d="M446.5 107.3H461.5" stroke="#787878" stroke-width="1.8"/><path d="M451.5 106.5Q451.5 104.5 454 104.5Q456.5 104.5 456.5 106.5" fill="none" stroke="#787878" stroke-width="1.2"/><path d="M447.5 109.5H460.5L459.3 124.5H448.7Z" fill="#787878"/><path d="M451 111.5V122.5M454 111.5V122.5M457 111.5V122.5" stroke="#e8e8e8" stroke-width="1.3"/><path d="M476 106.5L490 116M476 112.8L490 110" stroke="#9a9a9a" stroke-width="1.8"/><path d="M476 112.8L490 110" stroke="#d8d8d8" stroke-width="1"/><ellipse cx="494" cy="110" rx="3.5" ry="2.6" fill="none" stroke="#7a7a7a" stroke-width="1.6"/><ellipse cx="494" cy="118" rx="3.5" ry="2.6" fill="none" stroke="#7a7a7a" stroke-width="1.6"/><path d="M517.5 104H524.5L528 107.5V119.5H517.5Z" fill="#fafafa" stroke="#9a9a9a" stroke-width="0.9"/><path d="M512.5 108.5H519.5L523 112V123.5H512.5Z" fill="#fafafa" stroke="#8a8a8a" stroke-width="0.9"/><path d="M514.5 114H521M514.5 116.5H521M514.5 119H520M514.5 121.3H521" stroke="#9a9a9a" stroke-width="0.8"/><rect x="545.5" y="103.5" width="15.5" height="19.5" rx="1" fill="#e4e4e4" stroke="#9a9a9a" stroke-width="1"/><rect x="549" y="102.5" width="9" height="3.5" fill="#cfcfcf" stroke="#9a9a9a" stroke-width="0.8"/><path d="M548 108H556L559 111V121.5H548Z" fill="#fff" stroke="#8a8a8a" stroke-width="0.9"/><path d="M550 113H556M550 115.5H557M550 118H556" stroke="#9a9a9a" stroke-width="0.8"/><path d="M577 113L585.5 105.5V110H590Q596 110 596 116Q596 122 590 122V118.5Q592 118 592 116Q592 114 589.5 114H585.5V120.5Z" fill="#c0c0c0" stroke="#a8a8a8" stroke-width="0.8"/><path d="M628.4 113L619.9 105.5V110H615.4Q609.4 110 609.4 116Q609.4 122 615.4 122V118.5Q613.4 118 613.4 116Q613.4 114 615.9 114H619.9V120.5Z" fill="#c0c0c0" stroke="#a8a8a8" stroke-width="0.8"/><path d="M659.3 106.5V121Q670 127 680.8 121V106.5Z" fill="#6a9bd0" stroke="#2d4a6a" stroke-width="1"/><ellipse cx="670" cy="106.5" rx="10.7" ry="3.4" fill="#9cc4ea" stroke="#2d4a6a" stroke-width="1"/><path d="M659.3 111.5Q670 117 680.8 111.5M659.3 116.5Q670 122 680.8 116.5" fill="none" stroke="#2d4a6a" stroke-width="1"/><path d="M709.5 111.75L713.5 106.5H730.0V117.0H713.5Z" fill="#f5d547" stroke="#c8a020" stroke-width="1"/><text x="714.5" y="115.0" font-size="9.5" font-weight="bold" fill="#333" font-family="Liberation Sans" textLength="14.0" lengthAdjust="spacingAndGlyphs">abc</text><circle cx="751.2" cy="110.2" r="6.3" fill="#9a2a10" stroke="#2a5a8a" stroke-width="0.8"/><path d="M751.2 110.2V103.9A6.3 6.3 0 0 0 745 109Z" fill="#f5d547"/><path d="M751.2 110.2L745 109A6.3 6.3 0 0 0 749 116.2Z" fill="#6aaa4a"/><rect x="753" y="116.5" width="3.5" height="7.5" fill="#f5d547" stroke="#c8a020" stroke-width="0.6"/><rect x="757" y="112" width="3.3" height="12" fill="#6aaa4a" stroke="#2a5a8a" stroke-width="0.8"/><rect x="761" y="119" width="3.2" height="5" fill="#8a2a10"/><rect x="775.5" y="104" width="23.5" height="20" fill="#e0f0fa" stroke="#3c8ee0" stroke-width="1"/><path d="M776.5 111.75L780.5 106.5H796.0V117.0H780.5Z" fill="#f5d547" stroke="#c8a020" stroke-width="1"/><text x="781.5" y="115.0" font-size="9.5" font-weight="bold" fill="#333" font-family="Liberation Sans" textLength="10.5" lengthAdjust="spacingAndGlyphs">ab</text><circle cx="793.6" cy="119.5" r="4" fill="#c8201a" stroke="#7a1010" stroke-width="0.6"/><path d="M808 111.75L812 106.5H828.5V117.0H812Z" fill="#e6e6e6" stroke="#a8a8a8" stroke-width="1"/><text x="813" y="115.0" font-size="9.5" font-weight="bold" fill="#6a6a6a" font-family="Liberation Sans" textLength="11.5" lengthAdjust="spacingAndGlyphs">ab</text><circle cx="826.6" cy="120.1" r="4.5" fill="#8c8c8c"/><path d="M841 111.75L845 106.5H861.5V117.0H845Z" fill="#e6e6e6" stroke="#a8a8a8" stroke-width="1"/><text x="846" y="115.0" font-size="9.5" font-weight="bold" fill="#6a6a6a" font-family="Liberation Sans" textLength="14.0" lengthAdjust="spacingAndGlyphs">abc</text><path d="M849 121.5Q856.5 115 864 121.5Q856.5 128 849 121.5Z" fill="#fff" stroke="#777" stroke-width="0.9"/><circle cx="856.5" cy="121.5" r="2" fill="#555"/><path d="M874.3 111.75L878.3 106.5H894.8V117.0H878.3Z" fill="#e6e6e6" stroke="#a8a8a8" stroke-width="1"/><text x="879.3" y="115.0" font-size="9.5" font-weight="bold" fill="#6a6a6a" font-family="Liberation Sans" textLength="14.0" lengthAdjust="spacingAndGlyphs">abc</text><rect x="886.8" y="115.5" width="10.5" height="10.5" rx="1.5" fill="#8a8a8a"/><path d="M888.5 120.7H893M891.5 118L894.5 120.7L891.5 123.4" stroke="#fff" stroke-width="1.8" fill="none"/><path d="M907.2 111.75L911.2 106.5H927.7V117.0H911.2Z" fill="#e6e6e6" stroke="#a8a8a8" stroke-width="1"/><text x="912.2" y="115.0" font-size="9.5" font-weight="bold" fill="#6a6a6a" font-family="Liberation Sans" textLength="14.0" lengthAdjust="spacingAndGlyphs">abc</text><rect x="920.4" y="115.5" width="10" height="10" rx="1.5" fill="#7c7c7c"/><circle cx="925.4" cy="120.5" r="2.6" fill="none" stroke="#fff" stroke-width="1.4"/><path d="M940.3 111.75L944.3 106.5H960.8V117.0H944.3Z" fill="#e6e6e6" stroke="#a8a8a8" stroke-width="1"/><text x="945.3" y="115.0" font-size="9.5" font-weight="bold" fill="#6a6a6a" font-family="Liberation Sans" textLength="14.0" lengthAdjust="spacingAndGlyphs">abc</text><rect x="953.5" y="115.5" width="10" height="10" rx="1.5" fill="#c4c4c4"/><path d="M955.5 123.5L961.5 117.5" stroke="#fff" stroke-width="1.6"/><g transform="translate(1008.3 115) rotate(-45)"><path d="M-8.5 -7V0A8.5 8.5 0 0 0 8.5 0V-7H3V0A3 3 0 0 1 -3 0V-7Z" fill="#a02a06" stroke="#6a1a08" stroke-width="0.6"/><rect x="-8.1" y="-6.6" width="4.7" height="3.3" fill="#f2dede"/><rect x="3.4" y="-6.6" width="4.7" height="3.3" fill="#f2dede"/></g><path d="M1034 103L1039 115L1044 106M1039 115V121M1044 106H1050M1044 111.5H1050M1033 110L1039 115L1044 111.5" stroke="#b0b0b0" stroke-width="1.3" fill="none"/><circle cx="1034" cy="103.5" r="1.7" fill="#ddd" stroke="#a8a8a8"/><rect x="1036.8" y="120" width="3.5" height="3.5" fill="#ddd" stroke="#a8a8a8"/><rect x="1043" y="104.5" width="3" height="3" fill="#ddd" stroke="#a8a8a8"/><rect x="1048.5" y="104.5" width="3" height="3" fill="#ddd" stroke="#a8a8a8"/><rect x="1048.5" y="110" width="3" height="3" fill="#ddd" stroke="#a8a8a8"/><path d="M1045 120.8h8.7l-4.35 4.6z" fill="#8a8a8a"/><path d="M1069 112.2l2.5 2.5l-2.5 2.5M1073 112.2l2.5 2.5l-2.5 2.5" stroke="#000" stroke-width="1.6" fill="none"/><path d="M1107.5 121.5Q1108 110 1121.8 106" stroke="#a8a8a8" stroke-width="1.4" fill="none"/><rect x="1105" y="119.5" width="4" height="4" fill="#eee" stroke="#999" stroke-width="0.9"/><rect x="1108" y="107.5" width="4" height="4" fill="#eee" stroke="#999" stroke-width="0.9"/><rect x="1120" y="104" width="4" height="4" fill="#eee" stroke="#999" stroke-width="0.9"/><rect x="1115.8" y="114.9" width="11" height="11" rx="1.5" fill="#b5b5b5"/><path d="M1121.3 117.10000000000001V123.7M1118.4289999999999 118.75L1124.171 122.05000000000001M1118.4289999999999 122.05000000000001L1124.171 118.75" stroke="#fff" stroke-width="1.2"/><circle cx="1121.3" cy="120.4" r="1.5" fill="none" stroke="#fff"/><path d="M1133.7 112.2h9.3l-4.65 4.6z" fill="#8a8a8a"/><path d="M1151 112.2l2.5 2.5l-2.5 2.5M1155 112.2l2.5 2.5l-2.5 2.5" stroke="#000" stroke-width="1.6" fill="none"/><g fill="#b4b4b4"><rect x="15" y="140" width="1" height="1"/><rect x="15" y="143" width="1" height="1"/><rect x="18" y="140" width="1" height="1"/><rect x="18" y="143" width="1" height="1"/><rect x="21" y="140" width="1" height="1"/><rect x="21" y="143" width="1" height="1"/><rect x="24" y="140" width="1" height="1"/><rect x="24" y="143" width="1" height="1"/><rect x="27" y="140" width="1" height="1"/><rect x="27" y="143" width="1" height="1"/><rect x="30" y="140" width="1" height="1"/><rect x="30" y="143" width="1" height="1"/><rect x="15" y="550" width="1" height="1"/><rect x="15" y="553" width="1" height="1"/><rect x="18" y="550" width="1" height="1"/><rect x="18" y="553" width="1" height="1"/><rect x="21" y="550" width="1" height="1"/><rect x="21" y="553" width="1" height="1"/><rect x="24" y="550" width="1" height="1"/><rect x="24" y="553" width="1" height="1"/><rect x="27" y="550" width="1" height="1"/><rect x="27" y="553" width="1" height="1"/><rect x="30" y="550" width="1" height="1"/><rect x="30" y="553" width="1" height="1"/><rect x="15" y="615" width="1" height="1"/><rect x="15" y="618" width="1" height="1"/><rect x="18" y="615" width="1" height="1"/><rect x="18" y="618" width="1" height="1"/><rect x="21" y="615" width="1" height="1"/><rect x="21" y="618" width="1" height="1"/><rect x="24" y="615" width="1" height="1"/><rect x="24" y="618" width="1" height="1"/><rect x="27" y="615" width="1" height="1"/><rect x="27" y="618" width="1" height="1"/><rect x="30" y="615" width="1" height="1"/><rect x="30" y="618" width="1" height="1"/></g><path d="M9 152.5V175H32Z" fill="#c8c8c8" stroke="#7a7a7a" stroke-width="1"/><path d="M13 163V171H21Z" fill="#f0f0f0" stroke="#7a7a7a" stroke-width="0.8"/><rect x="26" y="153" width="6" height="21" fill="#e0e0e0" stroke="#7a7a7a" stroke-width="0.8"/><path d="M29 156H32M29 159H32M29 162H32M29 165H32M29 168H32" stroke="#7a7a7a" stroke-width="0.6"/><circle cx="6" cy="196.5" r="2.6" fill="#c4c4c4" stroke="#999" stroke-width="0.7"/><circle cx="13" cy="186.7" r="2.6" fill="#c4c4c4" stroke="#999" stroke-width="0.7"/><circle cx="22" cy="188.5" r="2.6" fill="#c4c4c4" stroke="#999" stroke-width="0.7"/><rect x="15" y="197.5" width="11" height="10.5" rx="1.5" fill="#7a7a7a"/><path d="M17 202.7H22M20 200L23 202.7L20 205.4" stroke="#fff" stroke-width="1.8" fill="none"/><path d="M33 195h8l-4.0 4.5z" fill="#9a9a9a"/><path d="M10.5 223.0C10.0 218.5 14.0 217.0 18.0 217.3C21.0 217.5 22.5 219.0 25.0 218.3C29.0 217.5 32.0 219.0 32.0 222.5C32.0 226.0 30.0 228.5 27.0 228.5C24.0 228.5 23.0 226.5 20.0 226.8C16.0 227.5 11.0 228.0 10.5 223.0Z" fill="#c8c8c8" stroke="#8c8c8c" stroke-width="1"/><rect x="22" y="229.5" width="11" height="11" rx="1.5" fill="#8a8a8a"/><circle cx="27.5" cy="235" r="2.8" fill="none" stroke="#fff" stroke-width="1.4"/><circle cx="17.3" cy="257.3" r="7" fill="#c4c4c4" stroke="#8a8a8a"/><path d="M20 257L28 257L32.3 264L28 271L20 271L15.7 264Z" fill="#d0d0d0" stroke="#8a8a8a"/><path d="M18 259L25 265" stroke="#777" stroke-width="0.9"/><path d="M10.5 287.0C10.0 282.5 14.0 281.0 18.0 281.3C21.0 281.5 22.5 283.0 25.0 282.3C29.0 281.5 32.0 283.0 32.0 286.5C32.0 290.0 30.0 292.5 27.0 292.5C24.0 292.5 23.0 290.5 20.0 290.8C16.0 291.5 11.0 292.0 10.5 287.0Z" fill="#c8c8c8" stroke="#8c8c8c" stroke-width="1"/><ellipse cx="17.3" cy="286.6" rx="3.7" ry="2.3" fill="#f4f4f4" stroke="#8a8a8a" stroke-width="0.8"/><rect x="22" y="293.5" width="10.5" height="10.5" rx="1.5" fill="#b5b5b5"/><path d="M27.25 295.6V301.9M24.5095 297.175L29.9905 300.325M24.5095 300.325L29.9905 297.175" stroke="#fff" stroke-width="1.2"/><circle cx="27.25" cy="298.75" r="1.5" fill="none" stroke="#fff"/><path d="M10.5 319.0C10.0 314.5 14.0 313.0 18.0 313.3C21.0 313.5 22.5 315.0 25.0 314.3C29.0 313.5 32.0 315.0 32.0 318.5C32.0 322.0 30.0 324.5 27.0 324.5C24.0 324.5 23.0 322.5 20.0 322.8C16.0 323.5 11.0 324.0 10.5 319.0Z" fill="#c8c8c8" stroke="#8c8c8c" stroke-width="1"/><path d="M11 333Q11 326 18 325.5Q19 331 15 334Q12 335 11 333Z" fill="#c8c8c8" stroke="#8a8a8a" stroke-width="0.8"/><rect x="22" y="325.5" width="10.5" height="10.5" rx="1.5" fill="#b5b5b5"/><path d="M27.25 327.6V333.9M24.5095 329.175L29.9905 332.325M24.5095 332.325L29.9905 329.175" stroke="#fff" stroke-width="1.2"/><circle cx="27.25" cy="330.75" r="1.5" fill="none" stroke="#fff"/><path d="M10.5 351.5C10.0 347.0 14.0 345.5 18.0 345.8C21.0 346.0 22.5 347.5 25.0 346.8C29.0 346.0 32.0 347.5 32.0 351.0C32.0 354.5 30.0 357.0 27.0 357.0C24.0 357.0 23.0 355.0 20.0 355.3C16.0 356.0 11.0 356.5 10.5 351.5Z" fill="#c8c8c8" stroke="#8c8c8c" stroke-width="1"/><ellipse cx="17.3" cy="351" rx="3.7" ry="2.3" fill="#b4b4b4" stroke="#8a8a8a" stroke-width="0.8"/><rect x="22" y="357.5" width="10.5" height="10.5" rx="1.5" fill="#b5b5b5"/><path d="M27.25 359.6V365.9M24.5095 361.175L29.9905 364.325M24.5095 364.325L29.9905 361.175" stroke="#fff" stroke-width="1.2"/><circle cx="27.25" cy="362.75" r="1.5" fill="none" stroke="#fff"/><path d="M10.5 383.0C10.0 378.5 14.0 377.0 18.0 377.3C21.0 377.5 22.5 379.0 25.0 378.3C29.0 377.5 32.0 379.0 32.0 382.5C32.0 386.0 30.0 388.5 27.0 388.5C24.0 388.5 23.0 386.5 20.0 386.8C16.0 387.5 11.0 388.0 10.5 383.0Z" fill="#c8c8c8" stroke="#8c8c8c" stroke-width="1"/><ellipse cx="17.3" cy="382.6" rx="3.7" ry="2.3" fill="#f4f4f4" stroke="#8a8a8a" stroke-width="0.8"/><rect x="22" y="390" width="10" height="10" rx="1.5" fill="#b5b5b5"/><path d="M24.2 392.2L29.8 397.8M29.8 392.2L24.2 397.8" stroke="#fff" stroke-width="1.6"/><path d="M10.5 415.5C10.0 411.0 14.0 409.5 18.0 409.8C21.0 410.0 22.5 411.5 25.0 410.8C29.0 410.0 32.0 411.5 32.0 415.0C32.0 418.5 30.0 421.0 27.0 421.0C24.0 421.0 23.0 419.0 20.0 419.3C16.0 420.0 11.0 420.5 10.5 415.5Z" fill="#c8c8c8" stroke="#8c8c8c" stroke-width="1"/><path d="M11 430Q11 423 18 422.5Q19 428 15 431Q12 432 11 430Z" fill="#c8c8c8" stroke="#8a8a8a" stroke-width="0.8"/><rect x="22" y="422.5" width="10" height="10" rx="1.5" fill="#b5b5b5"/><path d="M24.2 424.7L29.8 430.3M29.8 424.7L24.2 430.3" stroke="#fff" stroke-width="1.6"/><path d="M11 447Q10 441 17 441.5Q25 442 30 443Q33 446 31 451Q28 454 22 453Q19 454 18 458Q16 462 13 459Q11 452 11 447Z" fill="#c8c8c8" stroke="#8a8a8a" stroke-width="1"/><path d="M12 488Q9 481 17 479Q22 478 25 474Q30 471 32 476Q34 482 28 487Q24 490 20 494Q14 497 12 488Z" fill="#c8c8c8" stroke="#8a8a8a" stroke-width="1"/><path d="M19.2 527.5l2.5 2.5l2.5 -2.5M19.2 531.5l2.5 2.5l2.5 -2.5" stroke="#000" stroke-width="1.5" fill="none"/><path d="M12.0 594l2.5 2.5l2.5 -2.5M12.0 598l2.5 2.5l2.5 -2.5" stroke="#000" stroke-width="1.5" fill="none"/><path d="M12.0 659.5l2.5 2.5l2.5 -2.5M12.0 663.5l2.5 2.5l2.5 -2.5" stroke="#000" stroke-width="1.5" fill="none"/><path d="M12 570Q13 563 22 564Q31 564 30.5 570Q29 576 23 575Q19 576 17 581Q13 582 12 570Z" fill="#5b8cc8" stroke="#2d5a8a" stroke-width="1"/><path d="M21 577L24 582L32 573" stroke="#f0c419" stroke-width="2" fill="none"/><circle cx="11.5" cy="563" r="2.2" fill="#f5d547" stroke="#555" stroke-width="0.6"/><circle cx="30" cy="563.5" r="2.2" fill="#f5d547" stroke="#555" stroke-width="0.6"/><circle cx="11.5" cy="581.5" r="2.2" fill="#f5d547" stroke="#555" stroke-width="0.6"/><circle cx="20.5" cy="568" r="1.8" fill="#f5d547" stroke="#555" stroke-width="0.6"/><path d="M21 629.5L30.5 646H11.5Z" fill="none" stroke="#7aaa1a" stroke-width="3.4" stroke-linejoin="round"/><path d="M11 646.5H31" stroke="#f5d070" stroke-width="2"/><path d="M10.5 649H31.5" stroke="#f0a030" stroke-width="1.8"/><rect x="268.5" y="138.5" width="11" height="11" rx="2.5" fill="none" stroke="#7a7a7a"/><rect x="271" y="143" width="4.5" height="4.5" fill="none" stroke="#555" stroke-width="1"/><path d="M273 142.5V140.8H277.3V145.2H276" fill="none" stroke="#555"/><rect x="282.5" y="138.5" width="11" height="11" rx="2.5" fill="none" stroke="#7a7a7a"/><path d="M285.3 141.3L290.7 146.7M290.7 141.3L285.3 146.7" stroke="#444" stroke-width="2"/><rect x="268.5" y="392.5" width="11" height="11" rx="2.5" fill="none" stroke="#7a7a7a"/><rect x="271" y="397" width="4.5" height="4.5" fill="none" stroke="#555" stroke-width="1"/><path d="M273 396.5V394.8H277.3V399.2H276" fill="none" stroke="#555"/><rect x="282.5" y="392.5" width="11" height="11" rx="2.5" fill="none" stroke="#7a7a7a"/><path d="M285.3 395.3L290.7 400.7M290.7 395.3L285.3 400.7" stroke="#444" stroke-width="2"/><rect x="1139.5" y="138.5" width="11" height="11" rx="2.5" fill="none" stroke="#7a7a7a"/><rect x="1142" y="143" width="4.5" height="4.5" fill="none" stroke="#555" stroke-width="1"/><path d="M1144 142.5V140.8H1148.3V145.2H1147" fill="none" stroke="#555"/><rect x="1153.5" y="138.5" width="11" height="11" rx="2.5" fill="none" stroke="#7a7a7a"/><path d="M1156.3 141.3L1161.7 146.7M1161.7 141.3L1156.3 146.7" stroke="#444" stroke-width="2"/><path d="M58 171L63 166L69 171L64 176Z" fill="#f5d547" stroke="#c8a020" stroke-width="0.7"/><path d="M58 171L61 168L64 171L61 174Z" fill="#6a9bd0"/><path d="M59 174L62 172L64 175Z" fill="#d03020"/><path d="M66 168L72.5 163" stroke="#d4a017" stroke-width="2"/><path d="M83.5 176.5V166.5H86.5M83.5 176.5H93" fill="none" stroke="#999" stroke-width="1"/><rect x="86.5" y="163.5" width="9" height="10" fill="#f2f2f2" stroke="#8a8a8a"/><path d="M89.5 171V163Q89.5 160.8 91.2 160.8Q93 160.8 93 163V170" fill="none" stroke="#4a7ab0" stroke-width="1.2"/><circle cx="94.5" cy="174.3" r="2.8" fill="#8a8a8a"/><path d="M93 174.3H96M94.5 172.8V175.8" stroke="#6ab040" stroke-width="1"/><path d="M107.5 169.5Q115 161 122.5 169.5Q115 177 107.5 169.5Z" fill="#dde" stroke="#888" stroke-width="0.8"/><circle cx="114.5" cy="169.5" r="3.5" fill="#5b8cc8"/><circle cx="114.5" cy="169.5" r="1.2" fill="#111"/><path d="M116 173H125L120.5 177Z" fill="#444"/><path d="M133 162H147L142 169.5V176.5H138V169.5Z" fill="#6a9bd0" stroke="#4a78ae" stroke-width="0.8"/><rect x="133" y="161.5" width="14" height="2.5" fill="#f5d547"/><text x="157.5" y="173" font-size="17" fill="#6a6a6a" font-family="Liberation Serif">ε</text><path d="M164 170H172L171 177H165Z" fill="#999"/><path d="M179.6 167.2h9.3l-4.65 4.6z" fill="#555"/><path d="M199 162.5H212M199 163V175H202" stroke="#aaa" stroke-width="1" fill="none"/><rect x="200.5" y="166" width="3" height="3" fill="#f0a030"/><rect x="200.5" y="171.5" width="3" height="3" fill="#f0a030"/><path d="M206 162V170H203L208 175L213 170H210V162Z" fill="#5b8cc8" stroke="#3f6e9e" stroke-width="0.6"/><path d="M224 162.5H237M224 163V175H227" stroke="#aaa" stroke-width="1" fill="none"/><rect x="225.5" y="166" width="3" height="3" fill="#f0a030"/><rect x="225.5" y="171.5" width="3" height="3" fill="#f0a030"/><path d="M231 175V167H228L233 162L238 167H235V175Z" fill="#5b8cc8" stroke="#3f6e9e" stroke-width="0.6"/><rect x="248.5" y="162.5" width="11" height="11" fill="none" stroke="#777"/><rect x="256" y="171" width="6" height="5" rx="2.5" fill="#fff" stroke="#d02020" stroke-width="1.3"/><rect x="78.5" y="188.5" width="16" height="16" fill="#fff" stroke="#a0a0a0"/><path d="M81.5 196.5L85 201L91.5 190.5" stroke="#000" stroke-width="1.8" fill="none"/><circle cx="110.8" cy="196.3" r="4.8" fill="#6d6470" stroke="#3d6a7a" stroke-width="0.8"/><rect x="58.5" y="417.5" width="11" height="11" fill="#f0f0f0" stroke="#888"/><circle cx="69" cy="428" r="2.5" fill="#aaa" stroke="#5aa03a" stroke-width="1.2"/><path d="M84 422A6 6 0 0 1 94.5 419.5" fill="none" stroke="#5b95d6" stroke-width="2.6"/><path d="M97 417L96.5 423L91 422Z" fill="#4a89d0"/><path d="M95.5 427A6 6 0 0 1 85 429.5" fill="none" stroke="#3f7fc8" stroke-width="2.6"/><path d="M82.5 432L83 426L88.5 427Z" fill="#3f7fc8"/><path d="M108 417H122L117 424.5V431.5H113V424.5Z" fill="#6a9bd0" stroke="#4a78ae" stroke-width="0.8"/><rect x="108" y="416.5" width="14" height="2.5" fill="#f5d547"/><path d="M133 418H146M133 418.5V431H136" stroke="#aaa" stroke-width="1" fill="none"/><rect x="134.5" y="422" width="3" height="3" fill="#f0a030"/><rect x="134.5" y="427.5" width="3" height="3" fill="#f0a030"/><path d="M140 431V423H137L142 418L147 423H144V431Z" fill="#5b8cc8" stroke="#3f6e9e" stroke-width="0.6"/><circle cx="165" cy="424" r="6.5" fill="#5b8cc8" stroke="#3f6e9e" stroke-width="0.6"/><text x="163" y="428.5" font-size="10" font-weight="bold" font-style="italic" fill="#fff" font-family="Liberation Serif">i</text><circle cx="914.7" cy="165.9" r="4.2" fill="#c82a20" stroke="#c82a20" stroke-width="2" stroke-dasharray="1.6 1.2"/><circle cx="914.7" cy="165.9" r="1.4" fill="#f0b030"/><circle cx="922.4" cy="169.8" r="3.3" fill="#888" stroke="#888" stroke-width="1.6" stroke-dasharray="1.3 1"/><circle cx="917.5" cy="173.5" r="2.5" fill="#a8c4e8"/><path d="M918 172H927L922.5 177Z" fill="#444"/><path d="M939.8 162.3H944.3Q946.6 162.3 946.6 164.6V168.3Q946.6 170 944.9 170H940.2Q938.6 170 938.6 171.6V173.2H937.2Q935.4 173.2 935.4 169.6Q935.4 166.3 937.4 166.3H942.6V165.3H938.2V164.6Q938.2 162.3 939.8 162.3Z" fill="#3a78c0"/><path d="M939.8 162.3H944.3Q946.6 162.3 946.6 164.6V168.3Q946.6 170 944.9 170H940.2Q938.6 170 938.6 171.6V173.2H937.2Q935.4 173.2 935.4 169.6Q935.4 166.3 937.4 166.3H942.6V165.3H938.2V164.6Q938.2 162.3 939.8 162.3Z" fill="#f2cf3c" transform="rotate(180 943 169.6)"/><circle cx="940.6" cy="164.3" r="0.7" fill="#fff"/><path d="M945.5 172.5H954.5L950 177.3Z" fill="#444"/><circle cx="967.9" cy="168.7" r="7.3" fill="#f6f6f6" stroke="#8a8a8a" stroke-width="1.1"/><path d="M967.9 163.5V169L971.5 171.5" stroke="#8a8a8a" stroke-width="1.1" fill="none"/><path d="M987.5 161.5H995L998.5 165V176.5H987.5Z" fill="#f4f4f4" stroke="#b0b0b0"/><path d="M989.5 166H996M989.5 168.5H996M989.5 171H996M989.5 173.5H996" stroke="#aaa" stroke-width="0.8"/><path d="M1009.6 163V175M1042.9 163V175" stroke="#d0d0d0"/><rect x="1018.8" y="162.2" width="12" height="12.5" rx="2" fill="#f5d547" stroke="#e0a020" stroke-width="0.8"/><path d="M1024 177L1025 172L1032 164L1034 165.5L1027 173.5Z" fill="#d8d8d8" stroke="#888" stroke-width="0.7"/><path d="M1052 166Q1051 161 1056 161.5L1054 164L1056 166L1058.5 164L1060 166Q1058 170 1054.5 168Z" fill="#f0f0f0" stroke="#777" stroke-width="1"/><path d="M1057 168L1065 175.5" stroke="#777" stroke-width="3.2" stroke-linecap="round"/><path d="M1058 169L1064.8 175.5" stroke="#e8c870" stroke-width="2" stroke-linecap="round"/><circle cx="915.8" cy="197" r="4.6" fill="none" stroke="#888" stroke-width="1.2"/><path d="M919 200.5L923 204.5" stroke="#888" stroke-width="1.4"/><path d="M85 448L90 452.5L85 457Z" fill="#555"/><path d="M106.0 447.5V456.5Q113.5 460.5 121.0 456.5V447.5" fill="#f2f2f2" stroke="#888" stroke-width="1"/><ellipse cx="113.5" cy="447.5" rx="7.5" ry="2.5" fill="#f2f2f2" stroke="#888" stroke-width="1"/><path d="M106.0 452.0Q113.5 455.5 121.0 452.0" fill="none" stroke="#888"/><path d="M82.7 471.5H92.3L87.5 476.8Z" fill="#555"/><path d="M106.0 469.5V478.5Q113.5 482.5 121.0 478.5V469.5" fill="#f2f2f2" stroke="#888" stroke-width="1"/><ellipse cx="113.5" cy="469.5" rx="7.5" ry="2.5" fill="#f2f2f2" stroke="#888" stroke-width="1"/><path d="M106.0 474.0Q113.5 477.5 121.0 474.0" fill="none" stroke="#888"/><circle cx="143.6" cy="489" r="1.6" fill="none" stroke="#5b8cc8" stroke-width="1"/><circle cx="134.7" cy="493" r="1.6" fill="none" stroke="#5b8cc8" stroke-width="1"/><circle cx="132.3" cy="501.4" r="1.6" fill="none" stroke="#5b8cc8" stroke-width="1"/><rect x="129.5" y="508.5" width="17" height="18.5" rx="1.5" fill="#f4f4f4" stroke="#8a8a8a"/><path d="M130 512.5H146M132 516H137M139 516H144.5M132 519.5H137M139 519.5H144.5M132 523H137M139 523H144.5" stroke="#999" stroke-width="1.3"/><path d="M131.5 534.3C134.5 534.3 136.5 536.3 139.0 536.0C141.5 535.7 143.0 533.8 145.0 534.3C147.5 535.0 147.5 538.0 146.3 540.0C145.5 541.5 147.0 543.0 146.0 545.0C145.0 546.5 142.5 545.5 139.5 544.5C136.5 543.5 133.5 546.0 131.0 545.8C128.5 545.5 128.5 543.5 129.5 541.0C130.3 539.0 128.0 537.0 129.0 535.5C129.5 534.7 130.5 534.3 131.5 534.3Z" fill="#e2e2e2" stroke="#8a8a8a" stroke-width="1"/><path d="M131.5 556.3C134.5 556.3 136.5 558.3 139.0 558.0C141.5 557.7 143.0 555.8 145.0 556.3C147.5 557.0 147.5 560.0 146.3 562.0C145.5 563.5 147.0 565.0 146.0 567.0C145.0 568.5 142.5 567.5 139.5 566.5C136.5 565.5 133.5 568.0 131.0 567.8C128.5 567.5 128.5 565.5 129.5 563.0C130.3 561.0 128.0 559.0 129.0 557.5C129.5 556.7 130.5 556.3 131.5 556.3Z" fill="#e2e2e2" stroke="#8a8a8a" stroke-width="1"/><path d="M131.5 622.3C134.5 622.3 136.5 624.3 139.0 624.0C141.5 623.7 143.0 621.8 145.0 622.3C147.5 623.0 147.5 626.0 146.3 628.0C145.5 629.5 147.0 631.0 146.0 633.0C145.0 634.5 142.5 633.5 139.5 632.5C136.5 631.5 133.5 634.0 131.0 633.8C128.5 633.5 128.5 631.5 129.5 629.0C130.3 627.0 128.0 625.0 129.0 623.5C129.5 622.7 130.5 622.3 131.5 622.3Z" fill="#e2e2e2" stroke="#8a8a8a" stroke-width="1"/><path d="M129.7 579.5L134.8 590.7L141 576.8L146 577.1" stroke="#707070" stroke-width="1.1" fill="none"/><circle cx="129.7" cy="579.5" r="1.8" fill="#fff" stroke="#808080" stroke-width="0.9"/><circle cx="134.8" cy="590.7" r="1.8" fill="#fff" stroke="#808080" stroke-width="0.9"/><circle cx="141" cy="576.8" r="1.8" fill="#fff" stroke="#808080" stroke-width="0.9"/><circle cx="146" cy="577.1" r="1.8" fill="#fff" stroke="#808080" stroke-width="0.9"/><rect x="130.40" y="598.20" width="5.5" height="5.6" fill="#2a1a3a"/><rect x="135.83" y="598.20" width="5.5" height="5.6" fill="#a8d0ee"/><rect x="141.26" y="598.20" width="5.5" height="5.6" fill="#2a1a3a"/><rect x="130.40" y="603.77" width="5.5" height="5.6" fill="#a8d0ee"/><rect x="135.83" y="603.77" width="5.5" height="5.6" fill="#2a1a3a"/><rect x="141.26" y="603.77" width="5.5" height="5.6" fill="#a8d0ee"/><rect x="130.40" y="609.34" width="5.5" height="5.6" fill="#2a1a3a"/><rect x="135.83" y="609.34" width="5.5" height="5.6" fill="#a8d0ee"/><rect x="141.26" y="609.34" width="5.5" height="5.6" fill="#ffffff"/><circle cx="143.6" cy="643" r="1.6" fill="none" stroke="#777" stroke-width="1"/><circle cx="134.7" cy="647" r="1.6" fill="none" stroke="#777" stroke-width="1"/><circle cx="132.3" cy="655.4" r="1.6" fill="none" stroke="#777" stroke-width="1"/><path d="M913 218L918 223L913 228Z" fill="#4f5a5e"/><path d="M913 240L918 245L913 250Z" fill="#4f5a5e"/><path d="M913 262L918 267L913 272Z" fill="#4f5a5e"/><path d="M913 284L918 289L913 294Z" fill="#4f5a5e"/><path d="M913 306L918 311L913 316Z" fill="#4f5a5e"/><path d="M913 328L918 333L913 338Z" fill="#4f5a5e"/><path d="M913 350L918 355L913 360Z" fill="#4f5a5e"/><path d="M913 372L918 377L913 382Z" fill="#4f5a5e"/><path d="M913 394L918 399L913 404Z" fill="#4f5a5e"/><path d="M913 416L918 421L913 426Z" fill="#4f5a5e"/><path d="M913 438L918 443L913 448Z" fill="#4f5a5e"/><path d="M913 460L918 465L913 470Z" fill="#4f5a5e"/><path d="M913 482L918 487L913 492Z" fill="#4f5a5e"/><path d="M913 504L918 509L913 514Z" fill="#4f5a5e"/><path d="M913 526L918 531L913 536Z" fill="#4f5a5e"/><path d="M913 548L918 553L913 558Z" fill="#4f5a5e"/><path d="M913 570L918 575L913 580Z" fill="#4f5a5e"/><path d="M913 592L918 597L913 602Z" fill="#4f5a5e"/><path d="M913 614L918 619L913 624Z" fill="#4f5a5e"/><path d="M913 636L918 641L913 646Z" fill="#4f5a5e"/><path d="M913 658L918 663L913 668Z" fill="#4f5a5e"/><circle cx="941" cy="222.8" r="8.6" fill="#fff" stroke="#7a7a7a" stroke-width="1.1"/><path d="M941 216V223L946 226" stroke="#7a7a7a" stroke-width="1.1" fill="none"/><circle cx="941.1" cy="244.9" r="7.0" fill="none" stroke="url(#qg)" stroke-width="3.3"/><path d="M943.4000000000001 247.2L948.5 252.3" stroke="#fff" stroke-width="6.0" stroke-linecap="butt"/><path d="M943.6 247.4L948.8000000000001 252.6" stroke="#5da33a" stroke-width="3.8" stroke-linecap="butt"/><path d="M938.5 242.2L942.8000000000001 243.6L944.6 247.6L940.2 246.6Z" fill="#e8952a"/><path d="M941.6 245.3L944.6 247.6L942.4000000000001 247.5Z" fill="#f5d040"/><circle cx="941.1" cy="266.9" r="7.0" fill="none" stroke="url(#qg)" stroke-width="3.3"/><path d="M943.4000000000001 269.2L948.5 274.3" stroke="#fff" stroke-width="6.0" stroke-linecap="butt"/><path d="M943.6 269.4L948.8000000000001 274.6" stroke="#5da33a" stroke-width="3.8" stroke-linecap="butt"/><path d="M938.5 264.2L942.8000000000001 265.6L944.6 269.6L940.2 268.6Z" fill="#e8952a"/><path d="M941.6 267.3L944.6 269.6L942.4000000000001 269.5Z" fill="#f5d040"/><circle cx="941.1" cy="288.9" r="7.0" fill="none" stroke="url(#qg)" stroke-width="3.3"/><path d="M943.4000000000001 291.2L948.5 296.3" stroke="#fff" stroke-width="6.0" stroke-linecap="butt"/><path d="M943.6 291.4L948.8000000000001 296.6" stroke="#5da33a" stroke-width="3.8" stroke-linecap="butt"/><path d="M938.5 286.2L942.8000000000001 287.6L944.6 291.6L940.2 290.6Z" fill="#e8952a"/><path d="M941.6 289.3L944.6 291.6L942.4000000000001 291.5Z" fill="#f5d040"/><circle cx="941.1" cy="310.9" r="7.0" fill="none" stroke="url(#qg)" stroke-width="3.3"/><path d="M943.4000000000001 313.2L948.5 318.3" stroke="#fff" stroke-width="6.0" stroke-linecap="butt"/><path d="M943.6 313.4L948.8000000000001 318.6" stroke="#5da33a" stroke-width="3.8" stroke-linecap="butt"/><path d="M938.5 308.2L942.8000000000001 309.6L944.6 313.6L940.2 312.6Z" fill="#e8952a"/><path d="M941.6 311.3L944.6 313.6L942.4000000000001 313.5Z" fill="#f5d040"/><circle cx="941.1" cy="332.9" r="7.0" fill="none" stroke="url(#qg)" stroke-width="3.3"/><path d="M943.4000000000001 335.2L948.5 340.3" stroke="#fff" stroke-width="6.0" stroke-linecap="butt"/><path d="M943.6 335.4L948.8000000000001 340.6" stroke="#5da33a" stroke-width="3.8" stroke-linecap="butt"/><path d="M938.5 330.2L942.8000000000001 331.6L944.6 335.6L940.2 334.6Z" fill="#e8952a"/><path d="M941.6 333.3L944.6 335.6L942.4000000000001 335.5Z" fill="#f5d040"/><circle cx="941.1" cy="354.9" r="7.0" fill="none" stroke="url(#qg)" stroke-width="3.3"/><path d="M943.4000000000001 357.2L948.5 362.3" stroke="#fff" stroke-width="6.0" stroke-linecap="butt"/><path d="M943.6 357.4L948.8000000000001 362.6" stroke="#5da33a" stroke-width="3.8" stroke-linecap="butt"/><path d="M938.5 352.2L942.8000000000001 353.6L944.6 357.6L940.2 356.6Z" fill="#e8952a"/><path d="M941.6 355.3L944.6 357.6L942.4000000000001 357.5Z" fill="#f5d040"/><circle cx="941.1" cy="376.9" r="7.0" fill="none" stroke="url(#qg)" stroke-width="3.3"/><path d="M943.4000000000001 379.2L948.5 384.3" stroke="#fff" stroke-width="6.0" stroke-linecap="butt"/><path d="M943.6 379.4L948.8000000000001 384.6" stroke="#5da33a" stroke-width="3.8" stroke-linecap="butt"/><path d="M938.5 374.2L942.8000000000001 375.6L944.6 379.6L940.2 378.6Z" fill="#e8952a"/><path d="M941.6 377.3L944.6 379.6L942.4000000000001 379.5Z" fill="#f5d040"/><circle cx="941.1" cy="398.9" r="7.0" fill="none" stroke="url(#qg)" stroke-width="3.3"/><path d="M943.4000000000001 401.2L948.5 406.3" stroke="#fff" stroke-width="6.0" stroke-linecap="butt"/><path d="M943.6 401.4L948.8000000000001 406.6" stroke="#5da33a" stroke-width="3.8" stroke-linecap="butt"/><path d="M938.5 396.2L942.8000000000001 397.6L944.6 401.6L940.2 400.6Z" fill="#e8952a"/><path d="M941.6 399.3L944.6 401.6L942.4000000000001 401.5Z" fill="#f5d040"/><circle cx="941.1" cy="420.9" r="7.0" fill="none" stroke="url(#qg)" stroke-width="3.3"/><path d="M943.4000000000001 423.2L948.5 428.3" stroke="#fff" stroke-width="6.0" stroke-linecap="butt"/><path d="M943.6 423.4L948.8000000000001 428.6" stroke="#5da33a" stroke-width="3.8" stroke-linecap="butt"/><path d="M938.5 418.2L942.8000000000001 419.6L944.6 423.6L940.2 422.6Z" fill="#e8952a"/><path d="M941.6 421.3L944.6 423.6L942.4000000000001 423.5Z" fill="#f5d040"/><circle cx="941.1" cy="442.9" r="7.0" fill="none" stroke="url(#qg)" stroke-width="3.3"/><path d="M943.4000000000001 445.2L948.5 450.3" stroke="#fff" stroke-width="6.0" stroke-linecap="butt"/><path d="M943.6 445.4L948.8000000000001 450.6" stroke="#5da33a" stroke-width="3.8" stroke-linecap="butt"/><path d="M938.5 440.2L942.8000000000001 441.6L944.6 445.6L940.2 444.6Z" fill="#e8952a"/><path d="M941.6 443.3L944.6 445.6L942.4000000000001 445.5Z" fill="#f5d040"/><circle cx="941.1" cy="464.9" r="7.0" fill="none" stroke="url(#qg)" stroke-width="3.3"/><path d="M943.4000000000001 467.2L948.5 472.3" stroke="#fff" stroke-width="6.0" stroke-linecap="butt"/><path d="M943.6 467.4L948.8000000000001 472.6" stroke="#5da33a" stroke-width="3.8" stroke-linecap="butt"/><path d="M938.5 462.2L942.8000000000001 463.6L944.6 467.6L940.2 466.6Z" fill="#e8952a"/><path d="M941.6 465.3L944.6 467.6L942.4000000000001 467.5Z" fill="#f5d040"/><circle cx="941.1" cy="486.9" r="7.0" fill="none" stroke="url(#qg)" stroke-width="3.3"/><path d="M943.4000000000001 489.2L948.5 494.3" stroke="#fff" stroke-width="6.0" stroke-linecap="butt"/><path d="M943.6 489.4L948.8000000000001 494.6" stroke="#5da33a" stroke-width="3.8" stroke-linecap="butt"/><path d="M938.5 484.2L942.8000000000001 485.6L944.6 489.6L940.2 488.6Z" fill="#e8952a"/><path d="M941.6 487.3L944.6 489.6L942.4000000000001 489.5Z" fill="#f5d040"/><circle cx="941.1" cy="508.9" r="7.0" fill="none" stroke="url(#qg)" stroke-width="3.3"/><path d="M943.4000000000001 511.2L948.5 516.3" stroke="#fff" stroke-width="6.0" stroke-linecap="butt"/><path d="M943.6 511.4L948.8000000000001 516.6" stroke="#5da33a" stroke-width="3.8" stroke-linecap="butt"/><path d="M938.5 506.2L942.8000000000001 507.6L944.6 511.6L940.2 510.6Z" fill="#e8952a"/><path d="M941.6 509.3L944.6 511.6L942.4000000000001 511.5Z" fill="#f5d040"/><circle cx="941.1" cy="530.9" r="7.0" fill="none" stroke="url(#qg)" stroke-width="3.3"/><path d="M943.4000000000001 533.2L948.5 538.3" stroke="#fff" stroke-width="6.0" stroke-linecap="butt"/><path d="M943.6 533.4L948.8000000000001 538.6" stroke="#5da33a" stroke-width="3.8" stroke-linecap="butt"/><path d="M938.5 528.2L942.8000000000001 529.6L944.6 533.6L940.2 532.6Z" fill="#e8952a"/><path d="M941.6 531.3L944.6 533.6L942.4000000000001 533.5Z" fill="#f5d040"/><circle cx="941.1" cy="552.9" r="7.0" fill="none" stroke="url(#qg)" stroke-width="3.3"/><path d="M943.4000000000001 555.2L948.5 560.3" stroke="#fff" stroke-width="6.0" stroke-linecap="butt"/><path d="M943.6 555.4L948.8000000000001 560.6" stroke="#5da33a" stroke-width="3.8" stroke-linecap="butt"/><path d="M938.5 550.2L942.8000000000001 551.6L944.6 555.6L940.2 554.6Z" fill="#e8952a"/><path d="M941.6 553.3L944.6 555.6L942.4000000000001 555.5Z" fill="#f5d040"/><circle cx="941.1" cy="574.9" r="7.0" fill="none" stroke="url(#qg)" stroke-width="3.3"/><path d="M943.4000000000001 577.2L948.5 582.3" stroke="#fff" stroke-width="6.0" stroke-linecap="butt"/><path d="M943.6 577.4L948.8000000000001 582.6" stroke="#5da33a" stroke-width="3.8" stroke-linecap="butt"/><path d="M938.5 572.2L942.8000000000001 573.6L944.6 577.6L940.2 576.6Z" fill="#e8952a"/><path d="M941.6 575.3L944.6 577.6L942.4000000000001 577.5Z" fill="#f5d040"/><circle cx="941.1" cy="596.9" r="7.0" fill="none" stroke="url(#qg)" stroke-width="3.3"/><path d="M943.4000000000001 599.2L948.5 604.3" stroke="#fff" stroke-width="6.0" stroke-linecap="butt"/><path d="M943.6 599.4L948.8000000000001 604.6" stroke="#5da33a" stroke-width="3.8" stroke-linecap="butt"/><path d="M938.5 594.2L942.8000000000001 595.6L944.6 599.6L940.2 598.6Z" fill="#e8952a"/><path d="M941.6 597.3L944.6 599.6L942.4000000000001 599.5Z" fill="#f5d040"/><circle cx="943.6" cy="619.5" r="6" fill="#8ec0ec" stroke="#5a90c0" stroke-width="0.6"/><path d="M940.5 616.5Q944 615.5 945.5 618.5Q944 621 942 619.5Z" fill="#5a9a3a"/><path d="M931.2 616.5L941 610.5" stroke="#333" stroke-width="1.6"/><circle cx="935.8" cy="613.7" r="1.4" fill="#222"/><path d="M936 614V622" stroke="#555" stroke-width="0.8"/><text x="931" y="629.6" font-size="10.5" font-weight="bold" fill="#111" font-family="Liberation Sans" textLength="18.5" lengthAdjust="spacingAndGlyphs">GDAL</text><path d="M941 632.5L949.5 641L941 649.5L932.5 641Z" fill="#fff" stroke="#333" stroke-width="1"/><path d="M934.5 643L941 649.5L947.5 643" stroke="#333" stroke-width="0.8" fill="none"/><path d="M941 646L939.5 636M941 646L944 636.5M941 646L937 640M941 646L945 641" stroke="#5aa03a" stroke-width="1.3"/><path d="M934 649.5H948" stroke="#555" stroke-width="0.8"/><text x="933" y="663.5" font-size="7.5" font-weight="bold" fill="#707070" font-family="Liberation Sans" textLength="16" lengthAdjust="spacingAndGlyphs">KML</text><rect x="943.5" y="665.5" width="7.5" height="7" rx="1.5" fill="#5a7a5a"/><path d="M947.2 666.8V671.5M945 669.2H949.5" stroke="#fff" stroke-width="1.2"/><circle cx="12.4" cy="690.3" r="4.4" fill="none" stroke="#888" stroke-width="1.2"/><path d="M15.5 693.5L18.5 696.5" stroke="#888" stroke-width="1.5"/><g transform="rotate(-35 485.5 689.5)"><rect x="480.5" y="680.5" width="10" height="17" rx="5" fill="#fff" stroke="#111" stroke-width="1.7"/><path d="M481 687.5H490M485.5 681V687.5" stroke="#111" stroke-width="1.3"/><path d="M482.8 683L483.6 686.5" stroke="#111" stroke-width="1.5"/></g><circle cx="488.5" cy="695.3" r="4" fill="#fff" stroke="#111" stroke-width="1.6"/><circle cx="488.5" cy="695.3" r="1.1" fill="#111"/><rect x="493.3" y="684.2" width="1.3" height="1.3" fill="#222"/><rect x="495.2" y="682.2" width="1.3" height="1.3" fill="#222"/><rect x="477.3" y="693.5" width="1.3" height="1.3" fill="#666"/><path d="M588 690H597L592.5 695Z" fill="#555"/><path d="M623.5 689.5V686.5Q623.5 682.5 628.5 682.5Q633.5 682.5 633.5 686.5V689.5" fill="none" stroke="#666" stroke-width="2"/><rect x="620.5" y="689" width="16" height="11.5" rx="1.5" fill="#666"/><path d="M778.4 687.5H786.4L782.4 683.5Z" fill="#555"/><path d="M778.4 694.5H786.4L782.4 698.5Z" fill="#555"/><path d="M888 687.5H896L892 683.5Z" fill="#555"/><path d="M888 694.5H896L892 698.5Z" fill="#555"/><rect x="908.5" y="682.5" width="16" height="16" fill="#fff" stroke="#888"/><path d="M911.5 690.5L915 695L921.5 684.5" stroke="#000" stroke-width="1.8" fill="none"/><ellipse cx="1019" cy="691.5" rx="9.2" ry="7.5" fill="#f0f0f0" stroke="#666" stroke-width="1.2"/><path d="M1010 691.5H1028M1011.5 687H1026.5M1011.5 696H1026.5M1019 684V699M1014.5 685Q1012 691.5 1014.5 698M1023.5 685Q1026 691.5 1023.5 698" stroke="#666" stroke-width="1" fill="none"/><path d="M1125 685Q1135 685 1135 691.5Q1135 697 1128 697.5L1131 701L1124 697.5Q1115.5 697 1115.5 691.5Q1115.5 685 1125 685Z" fill="#6a6a6a"/><circle cx="1120.5" cy="691.3" r="1.3" fill="#fff"/><circle cx="1125" cy="691.3" r="1.3" fill="#fff"/><circle cx="1129.5" cy="691.3" r="1.3" fill="#fff"/><g fill="#bbb"><rect x="1160" y="702" width="1" height="1"/><rect x="1160" y="699" width="1" height="1"/><rect x="1160" y="696" width="1" height="1"/><rect x="1160" y="693" width="1" height="1"/><rect x="1157" y="702" width="1" height="1"/><rect x="1157" y="699" width="1" height="1"/><rect x="1157" y="696" width="1" height="1"/><rect x="1154" y="702" width="1" height="1"/><rect x="1154" y="699" width="1" height="1"/><rect x="1151" y="702" width="1" height="1"/></g><text x="28.5" y="19.6" font-size="14.5" fill="#959595" textLength="276.7" lengthAdjust="spacing" >*Progetto Senza Titolo - QGIS 9200f538e9</text><text x="5.2" y="48.6" font-size="12.6" fill="#8a8a8a" textLength="53.6" lengthAdjust="spacing" >Progetto</text><text x="73.9" y="48.6" font-size="12.6" fill="#8a8a8a" textLength="52.8" lengthAdjust="spacing" >Modifica</text><text x="141.8" y="48.6" font-size="12.6" fill="#8a8a8a" textLength="61" lengthAdjust="spacing" >Visualizza</text><text x="217.8" y="48.6" font-size="12.6" fill="#8a8a8a" textLength="33.5" lengthAdjust="spacing" >Layer</text><text x="266.3" y="48.6" font-size="12.6" fill="#8a8a8a" textLength="79.5" lengthAdjust="spacing" >Impostazioni</text><text x="360.8" y="48.6" font-size="12.6" fill="#8a8a8a" textLength="45" lengthAdjust="spacing" >Plugins</text><text x="421.7" y="48.6" font-size="12.6" fill="#8a8a8a" textLength="45.7" lengthAdjust="spacing" >Vettore</text><text x="483.6" y="48.6" font-size="12.6" fill="#8a8a8a" textLength="38" lengthAdjust="spacing" >Raster</text><text x="537.5" y="48.6" font-size="12.6" fill="#8a8a8a" textLength="56.1" lengthAdjust="spacing" >Database</text><text x="608.2" y="48.6" font-size="12.6" fill="#8a8a8a" textLength="28.4" lengthAdjust="spacing" >Web</text><text x="652.5" y="48.6" font-size="12.6" fill="#8a8a8a" textLength="48" lengthAdjust="spacing" >HCMGIS</text><text x="716" y="48.6" font-size="12.6" fill="#8a8a8a" textLength="74.8" lengthAdjust="spacing" >Location Lab</text><text x="805.8" y="48.6" font-size="12.6" fill="#8a8a8a" textLength="53.7" lengthAdjust="spacing" >MMQGIS</text><text x="875" y="48.6" font-size="12.6" fill="#8a8a8a" textLength="66.2" lengthAdjust="spacing" >Processing</text><text x="956.2" y="48.6" font-size="12.6" fill="#8a8a8a" textLength="34.8" lengthAdjust="spacing" >Guida</text><text x="54" y="149.3" font-size="14" fill="#000" textLength="33.9" lengthAdjust="spacing" >Layer</text><text x="54.2" y="404.2" font-size="14" fill="#000" textLength="51.5" lengthAdjust="spacing" >Browser</text><text x="906.6" y="149.3" font-size="14" fill="#000" textLength="153.5" lengthAdjust="spacing" >Strumenti di Processing</text><text x="127.1" y="200.5" font-size="13" fill="#000" textLength="126.6" lengthAdjust="spacing" font-weight="bold" text-decoration="underline">alberi_monumentali</text><text x="957.4" y="228" font-size="13" fill="#000" textLength="95.3" lengthAdjust="spacing" >Usati di recente</text><text x="957.4" y="250" font-size="13" fill="#000" textLength="80" lengthAdjust="spacing" >Analisi di reti</text><text x="957.4" y="272" font-size="13" fill="#000" textLength="141.3" lengthAdjust="spacing" >Analisi geomorfologica</text><text x="957.4" y="294" font-size="13" fill="#000" textLength="80.9" lengthAdjust="spacing" >Analisi raster</text><text x="957.4" y="316" font-size="13" fill="#000" textLength="90.4" lengthAdjust="spacing" >Analisi vettore</text><text x="957.4" y="338" font-size="13" fill="#000" textLength="66.5" lengthAdjust="spacing" >Cartografia</text><text x="957.4" y="360" font-size="13" fill="#000" textLength="110.5" lengthAdjust="spacing" >Creazione vettore</text><text x="957.4" y="382" font-size="13" fill="#000" textLength="56.3" lengthAdjust="spacing" >Database</text><text x="957.4" y="404" font-size="13" fill="#000" textLength="105.6" lengthAdjust="spacing" >Generale vettore</text><text x="957.4" y="426" font-size="13" fill="#000" textLength="114.4" lengthAdjust="spacing" >Geometria vettore</text><text x="957.4" y="448" font-size="13" fill="#000" textLength="38.6" lengthAdjust="spacing" >Grafici</text><text x="957.4" y="470" font-size="13" fill="#000" textLength="90.5" lengthAdjust="spacing" >Interpolazione</text><text x="957.4" y="492" font-size="13" fill="#000" textLength="109.8" lengthAdjust="spacing" >Selezione vettore</text><text x="957.4" y="514" font-size="13" fill="#000" textLength="150" lengthAdjust="spacing" >Sovrapposizione vettore</text><text x="957.4" y="536" font-size="13" fill="#000" textLength="83" lengthAdjust="spacing" >Strumenti file</text><text x="957.4" y="558" font-size="13" fill="#000" textLength="96.8" lengthAdjust="spacing" >Strumenti Layer</text><text x="957.4" y="580" font-size="13" fill="#000" textLength="99.7" lengthAdjust="spacing" >Strumenti raster</text><text x="957.4" y="602" font-size="13" fill="#000" textLength="92.2" lengthAdjust="spacing" >Tabella vettore</text><text x="957.4" y="624" font-size="13" fill="#000" textLength="32.7" lengthAdjust="spacing" >GDAL</text><text x="957.4" y="646" font-size="13" fill="#000" textLength="39.8" lengthAdjust="spacing" >GRASS</text><text x="957.4" y="668" font-size="13" fill="#000" textLength="59.5" lengthAdjust="spacing" >KML tools</text><text x="931.7" y="203" font-size="13" fill="#a8a8a8" textLength="46" lengthAdjust="spacing" font-style="italic" >Cerca...</text><text x="27.5" y="695.4" font-size="13" fill="#787878" textLength="176" lengthAdjust="spacing" >Digita per localizzare (Ctrl+K)</text><text x="314.8" y="696.6" font-size="13" fill="#000" textLength="21.3" lengthAdjust="spacing" >590</text><svg x="347.8" y="684" width="3.4" height="16" overflow="hidden"><text x="-4" y="12.6" font-size="13" fill="#000" >d</text></svg><text x="361.9" y="696.6" font-size="13" fill="#000" textLength="101.7" lengthAdjust="spacing" >1785310,4733012</text><svg x="508.4" y="684" width="3.6" height="16" overflow="hidden"><text x="-3" y="12.6" font-size="13" fill="#444" >a</text></svg><text x="521.7" y="696.6" font-size="13" fill="#000" textLength="58.6" lengthAdjust="spacing" >1:1753017</text><text x="646.4" y="697" font-size="13" fill="#000" textLength="48.6" lengthAdjust="spacing" >'ingrand</text><text x="704.1" y="697" font-size="13" fill="#000" textLength="31" lengthAdjust="spacing" >100%</text><text x="800.3" y="697" font-size="13" fill="#000" textLength="5.5" lengthAdjust="spacing" >z</text><text x="818.7" y="697" font-size="13" fill="#000" textLength="26.4" lengthAdjust="spacing" >0,0 °</text><text x="931.2" y="696.2" font-size="13" fill="#000" textLength="59.8" lengthAdjust="spacing" >Visualizza</text><text x="1033.2" y="696.4" font-size="13" fill="#000" textLength="61.9" lengthAdjust="spacing" >EPSG:3003</text><path d="M14.7 50.5H19.4" stroke="#8a8a8a" stroke-width="1"/><path d="M73.9 50.5H85.7" stroke="#8a8a8a" stroke-width="1"/><path d="M141.8 50.5H150.9" stroke="#8a8a8a" stroke-width="1"/><path d="M217.8 50.5H225.2" stroke="#8a8a8a" stroke-width="1"/><path d="M266.3 50.5H270.2" stroke="#8a8a8a" stroke-width="1"/><path d="M360.8 50.5H370.0" stroke="#8a8a8a" stroke-width="1"/><path d="M446.6 50.5H454.6" stroke="#8a8a8a" stroke-width="1"/><path d="M483.6 50.5H492.9" stroke="#8a8a8a" stroke-width="1"/><path d="M537.5 50.5H547.0" stroke="#8a8a8a" stroke-width="1"/><path d="M608.2 50.5H621.4" stroke="#8a8a8a" stroke-width="1"/><path d="M716.0 50.5H723.3" stroke="#8a8a8a" stroke-width="1"/><path d="M895.8 50.5H902.5" stroke="#8a8a8a" stroke-width="1"/><path d="M956.2 50.5H966.3" stroke="#8a8a8a" stroke-width="1"/><path d="M127 202.5H253.7" stroke="#000" stroke-width="1.2"/><clipPath id="bclip"><rect x="50" y="441" width="227" height="216"/></clipPath><g clip-path="url(#bclip)"><text x="129.4" y="457" font-size="13" fill="#000" textLength="55.3" lengthAdjust="spacing" >dati.gpkg</text><text x="129.4" y="479" font-size="13" fill="#000" letter-spacing="0.28" >dati_corso_qgis_base.gpkg</text><text x="154.2" y="501" font-size="13" fill="#000" letter-spacing="0.28" >alberi_monumentali</text><text x="154.2" y="523" font-size="13" fill="#000" letter-spacing="0.28" >Circondario_Empolese</text><text x="154.2" y="545" font-size="13" fill="#000" textLength="61" lengthAdjust="spacing" >com_arno</text><text x="154.2" y="567" font-size="13" fill="#000" textLength="63.3" lengthAdjust="spacing" >comuni_rt</text><text x="154.2" y="589" font-size="13" fill="#000" textLength="72.5" lengthAdjust="spacing" >corsi_acque</text><text x="154.2" y="611" font-size="13" fill="#000" textLength="70.2" lengthAdjust="spacing" >dtm_rt_100</text><text x="154.3" y="633" font-size="13" fill="#000" textLength="88" lengthAdjust="spacing" >edificato_3003</text><text x="154.2" y="655" font-size="13" fill="#000" letter-spacing="0.28" >GeoCoding Plugin Results</text></g></svg>
</body></html>
